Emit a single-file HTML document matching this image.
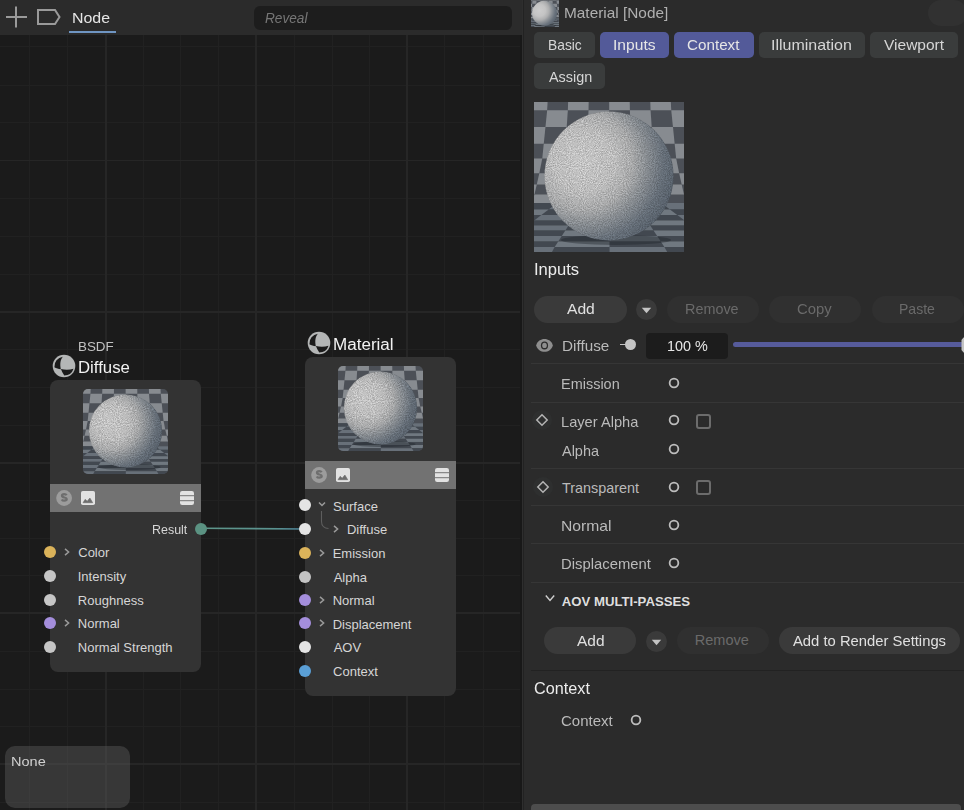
<!DOCTYPE html>
<html><head><meta charset="utf-8"><style>
html,body{margin:0;padding:0;width:964px;height:810px;overflow:hidden;background:#2b2b2b}
body{position:relative;font-family:"Liberation Sans",sans-serif}
</style></head><body>
<svg width="0" height="0" style="position:absolute">
<defs>
<radialGradient id="sph" cx="0.3" cy="0.38" r="0.8">
<stop offset="0" stop-color="#cdcdcd"/>
<stop offset="0.3" stop-color="#c4c4c4"/>
<stop offset="0.48" stop-color="#aeafb0"/>
<stop offset="0.62" stop-color="#8c9196"/>
<stop offset="0.78" stop-color="#6a737d"/>
<stop offset="1" stop-color="#505a65"/>
</radialGradient>
<filter id="nzL" x="0" y="0" width="100%" height="100%" color-interpolation-filters="sRGB">
<feTurbulence type="fractalNoise" baseFrequency="0.93" numOctaves="2" seed="5" result="t"/>
<feColorMatrix in="t" type="matrix" values="1.6 0 0 0 -0.3  1.6 0 0 0 -0.3  1.6 0 0 0 -0.3  0 0 0 0 1" result="g"/>
<feComposite in="SourceGraphic" in2="g" operator="arithmetic" k1="0.32" k2="0.8" k3="0" k4="0"/>
</filter><filter id="nzM" x="0" y="0" width="100%" height="100%" color-interpolation-filters="sRGB">
<feTurbulence type="fractalNoise" baseFrequency="0.53" numOctaves="2" seed="5" result="t"/>
<feColorMatrix in="t" type="matrix" values="1.6 0 0 0 -0.3  1.6 0 0 0 -0.3  1.6 0 0 0 -0.3  0 0 0 0 1" result="g"/>
<feComposite in="SourceGraphic" in2="g" operator="arithmetic" k1="0.32" k2="0.8" k3="0" k4="0"/>
</filter>
<symbol id="prev" viewBox="0 0 150 150"><rect x="0" y="0" width="150" height="150" fill="#4c5057"/><polygon points="-210.40,-8.40 -190.00,-8.40 -193.67,8.30 -214.35,8.30" fill="#878b90"/><polygon points="-169.60,-8.40 -149.20,-8.40 -152.30,8.30 -172.98,8.30" fill="#878b90"/><polygon points="-128.80,-8.40 -108.40,-8.40 -110.94,8.30 -131.62,8.30" fill="#878b90"/><polygon points="-88.00,-8.40 -67.60,-8.40 -69.57,8.30 -90.25,8.30" fill="#878b90"/><polygon points="-47.20,-8.40 -26.80,-8.40 -28.21,8.30 -48.89,8.30" fill="#878b90"/><polygon points="-6.40,-8.40 14.00,-8.40 13.16,8.30 -7.53,8.30" fill="#878b90"/><polygon points="34.40,-8.40 54.80,-8.40 54.52,8.30 33.84,8.30" fill="#878b90"/><polygon points="75.20,-8.40 95.60,-8.40 95.88,8.30 75.20,8.30" fill="#878b90"/><polygon points="116.00,-8.40 136.40,-8.40 137.25,8.30 116.57,8.30" fill="#878b90"/><polygon points="156.80,-8.40 177.20,-8.40 178.61,8.30 157.93,8.30" fill="#878b90"/><polygon points="197.60,-8.40 218.00,-8.40 219.98,8.30 199.30,8.30" fill="#878b90"/><polygon points="238.40,-8.40 258.80,-8.40 261.34,8.30 240.66,8.30" fill="#878b90"/><polygon points="-235.03,8.30 -214.35,8.30 -222.29,25.00 -243.54,25.00" fill="#878b90"/><polygon points="-193.67,8.30 -172.98,8.30 -179.79,25.00 -201.04,25.00" fill="#878b90"/><polygon points="-152.30,8.30 -131.62,8.30 -137.29,25.00 -158.54,25.00" fill="#878b90"/><polygon points="-110.94,8.30 -90.25,8.30 -94.79,25.00 -116.04,25.00" fill="#878b90"/><polygon points="-69.57,8.30 -48.89,8.30 -52.29,25.00 -73.54,25.00" fill="#878b90"/><polygon points="-28.21,8.30 -7.53,8.30 -9.79,25.00 -31.04,25.00" fill="#878b90"/><polygon points="13.16,8.30 33.84,8.30 32.71,25.00 11.46,25.00" fill="#878b90"/><polygon points="54.52,8.30 75.20,8.30 75.21,25.00 53.96,25.00" fill="#878b90"/><polygon points="95.88,8.30 116.57,8.30 117.71,25.00 96.46,25.00" fill="#878b90"/><polygon points="137.25,8.30 157.93,8.30 160.21,25.00 138.96,25.00" fill="#878b90"/><polygon points="178.61,8.30 199.30,8.30 202.71,25.00 181.46,25.00" fill="#878b90"/><polygon points="219.98,8.30 240.66,8.30 245.21,25.00 223.96,25.00" fill="#878b90"/><polygon points="-222.29,25.00 -201.04,25.00 -208.42,41.70 -230.24,41.70" fill="#878b90"/><polygon points="-179.79,25.00 -158.54,25.00 -164.78,41.70 -186.60,41.70" fill="#878b90"/><polygon points="-137.29,25.00 -116.04,25.00 -121.15,41.70 -142.96,41.70" fill="#878b90"/><polygon points="-94.79,25.00 -73.54,25.00 -77.51,41.70 -99.33,41.70" fill="#878b90"/><polygon points="-52.29,25.00 -31.04,25.00 -33.88,41.70 -55.69,41.70" fill="#878b90"/><polygon points="-9.79,25.00 11.46,25.00 9.76,41.70 -12.06,41.70" fill="#878b90"/><polygon points="32.71,25.00 53.96,25.00 53.40,41.70 31.58,41.70" fill="#878b90"/><polygon points="75.21,25.00 96.46,25.00 97.03,41.70 75.21,41.70" fill="#878b90"/><polygon points="117.71,25.00 138.96,25.00 140.67,41.70 118.85,41.70" fill="#878b90"/><polygon points="160.21,25.00 181.46,25.00 184.30,41.70 162.49,41.70" fill="#878b90"/><polygon points="202.71,25.00 223.96,25.00 227.94,41.70 206.12,41.70" fill="#878b90"/><polygon points="245.21,25.00 266.46,25.00 271.57,41.70 249.76,41.70" fill="#878b90"/><polygon points="-252.05,41.70 -230.24,41.70 -237.28,56.50 -259.60,56.50" fill="#878b90"/><polygon points="-208.42,41.70 -186.60,41.70 -192.63,56.50 -214.95,56.50" fill="#878b90"/><polygon points="-164.78,41.70 -142.96,41.70 -147.99,56.50 -170.31,56.50" fill="#878b90"/><polygon points="-121.15,41.70 -99.33,41.70 -103.35,56.50 -125.67,56.50" fill="#878b90"/><polygon points="-77.51,41.70 -55.69,41.70 -58.71,56.50 -81.03,56.50" fill="#878b90"/><polygon points="-33.88,41.70 -12.06,41.70 -14.07,56.50 -36.39,56.50" fill="#878b90"/><polygon points="9.76,41.70 31.58,41.70 30.58,56.50 8.26,56.50" fill="#878b90"/><polygon points="53.40,41.70 75.21,41.70 75.22,56.50 52.90,56.50" fill="#878b90"/><polygon points="97.03,41.70 118.85,41.70 119.86,56.50 97.54,56.50" fill="#878b90"/><polygon points="140.67,41.70 162.49,41.70 164.50,56.50 142.18,56.50" fill="#878b90"/><polygon points="184.30,41.70 206.12,41.70 209.14,56.50 186.82,56.50" fill="#878b90"/><polygon points="227.94,41.70 249.76,41.70 253.79,56.50 231.47,56.50" fill="#878b90"/><polygon points="-237.28,56.50 -214.95,56.50 -227.73,71.30 -251.03,71.30" fill="#878b90"/><polygon points="-192.63,56.50 -170.31,56.50 -181.12,71.30 -204.42,71.30" fill="#878b90"/><polygon points="-147.99,56.50 -125.67,56.50 -134.51,71.30 -157.82,71.30" fill="#878b90"/><polygon points="-103.35,56.50 -81.03,56.50 -87.90,71.30 -111.21,71.30" fill="#878b90"/><polygon points="-58.71,56.50 -36.39,56.50 -41.29,71.30 -64.60,71.30" fill="#878b90"/><polygon points="-14.07,56.50 8.26,56.50 5.32,71.30 -17.99,71.30" fill="#878b90"/><polygon points="30.58,56.50 52.90,56.50 51.92,71.30 28.62,71.30" fill="#878b90"/><polygon points="75.22,56.50 97.54,56.50 98.53,71.30 75.23,71.30" fill="#878b90"/><polygon points="119.86,56.50 142.18,56.50 145.14,71.30 121.84,71.30" fill="#878b90"/><polygon points="164.50,56.50 186.82,56.50 191.75,71.30 168.45,71.30" fill="#878b90"/><polygon points="209.14,56.50 231.47,56.50 238.36,71.30 215.06,71.30" fill="#878b90"/><polygon points="253.79,56.50 276.11,56.50 284.97,71.30 261.66,71.30" fill="#878b90"/><polygon points="-274.34,71.30 -251.03,71.30 -262.91,82.40 -287.07,82.40" fill="#878b90"/><polygon points="-227.73,71.30 -204.42,71.30 -214.61,82.40 -238.76,82.40" fill="#878b90"/><polygon points="-181.12,71.30 -157.82,71.30 -166.30,82.40 -190.45,82.40" fill="#878b90"/><polygon points="-134.51,71.30 -111.21,71.30 -117.99,82.40 -142.15,82.40" fill="#878b90"/><polygon points="-87.90,71.30 -64.60,71.30 -69.68,82.40 -93.84,82.40" fill="#878b90"/><polygon points="-41.29,71.30 -17.99,71.30 -21.38,82.40 -45.53,82.40" fill="#878b90"/><polygon points="5.32,71.30 28.62,71.30 26.93,82.40 2.78,82.40" fill="#878b90"/><polygon points="51.92,71.30 75.23,71.30 75.24,82.40 51.08,82.40" fill="#878b90"/><polygon points="98.53,71.30 121.84,71.30 123.54,82.40 99.39,82.40" fill="#878b90"/><polygon points="145.14,71.30 168.45,71.30 171.85,82.40 147.70,82.40" fill="#878b90"/><polygon points="191.75,71.30 215.06,71.30 220.16,82.40 196.00,82.40" fill="#878b90"/><polygon points="238.36,71.30 261.66,71.30 268.47,82.40 244.31,82.40" fill="#878b90"/><polygon points="-262.91,82.40 -238.76,82.40 -248.90,92.60 -273.83,92.60" fill="#878b90"/><polygon points="-214.61,82.40 -190.45,82.40 -199.03,92.60 -223.96,92.60" fill="#878b90"/><polygon points="-166.30,82.40 -142.15,82.40 -149.16,92.60 -174.09,92.60" fill="#878b90"/><polygon points="-117.99,82.40 -93.84,82.40 -99.29,92.60 -124.23,92.60" fill="#878b90"/><polygon points="-69.68,82.40 -45.53,82.40 -49.43,92.60 -74.36,92.60" fill="#878b90"/><polygon points="-21.38,82.40 2.78,82.40 0.44,92.60 -24.49,92.60" fill="#878b90"/><polygon points="26.93,82.40 51.08,82.40 50.31,92.60 25.38,92.60" fill="#878b90"/><polygon points="75.24,82.40 99.39,82.40 100.18,92.60 75.24,92.60" fill="#878b90"/><polygon points="123.54,82.40 147.70,82.40 150.05,92.60 125.11,92.60" fill="#878b90"/><polygon points="171.85,82.40 196.00,82.40 199.91,92.60 174.98,92.60" fill="#878b90"/><polygon points="220.16,82.40 244.31,82.40 249.78,92.60 224.85,92.60" fill="#878b90"/><polygon points="268.47,82.40 292.62,82.40 299.65,92.60 274.72,92.60" fill="#878b90"/><polygon points="-298.76,92.60 -273.83,92.60 -290.88,101.00 -317.04,101.00" fill="#878b90"/><polygon points="-248.90,92.60 -223.96,92.60 -238.58,101.00 -264.73,101.00" fill="#878b90"/><polygon points="-199.03,92.60 -174.09,92.60 -186.27,101.00 -212.42,101.00" fill="#878b90"/><polygon points="-149.16,92.60 -124.23,92.60 -133.97,101.00 -160.12,101.00" fill="#878b90"/><polygon points="-99.29,92.60 -74.36,92.60 -81.66,101.00 -107.81,101.00" fill="#878b90"/><polygon points="-49.43,92.60 -24.49,92.60 -29.35,101.00 -55.51,101.00" fill="#878b90"/><polygon points="0.44,92.60 25.38,92.60 22.95,101.00 -3.20,101.00" fill="#878b90"/><polygon points="50.31,92.60 75.24,92.60 75.26,101.00 49.10,101.00" fill="#878b90"/><polygon points="100.18,92.60 125.11,92.60 127.56,101.00 101.41,101.00" fill="#878b90"/><polygon points="150.05,92.60 174.98,92.60 179.87,101.00 153.71,101.00" fill="#878b90"/><polygon points="199.91,92.60 224.85,92.60 232.17,101.00 206.02,101.00" fill="#878b90"/><polygon points="249.78,92.60 274.72,92.60 284.48,101.00 258.33,101.00" fill="#878b90"/><rect x="0" y="101" width="150" height="6.400000000000006" fill="#424850"/><polygon points="-290.88,101.00 -264.73,101.00 -319.00,107.40 -349.33,107.40" fill="#687079"/><polygon points="-238.58,101.00 -212.42,101.00 -258.34,107.40 -288.67,107.40" fill="#687079"/><polygon points="-186.27,101.00 -160.12,101.00 -197.68,107.40 -228.01,107.40" fill="#687079"/><polygon points="-133.97,101.00 -107.81,101.00 -137.02,107.40 -167.35,107.40" fill="#687079"/><polygon points="-81.66,101.00 -55.51,101.00 -76.36,107.40 -106.69,107.40" fill="#687079"/><polygon points="-29.35,101.00 -3.20,101.00 -15.69,107.40 -46.03,107.40" fill="#687079"/><polygon points="22.95,101.00 49.10,101.00 44.97,107.40 14.64,107.40" fill="#687079"/><polygon points="75.26,101.00 101.41,101.00 105.63,107.40 75.30,107.40" fill="#687079"/><polygon points="127.56,101.00 153.71,101.00 166.29,107.40 135.96,107.40" fill="#687079"/><polygon points="179.87,101.00 206.02,101.00 226.95,107.40 196.62,107.40" fill="#687079"/><polygon points="232.17,101.00 258.33,101.00 287.61,107.40 257.28,107.40" fill="#687079"/><polygon points="284.48,101.00 310.63,101.00 348.27,107.40 317.94,107.40" fill="#687079"/><rect x="0" y="107.4" width="150" height="5.599999999999994" fill="#424850"/><polygon points="-379.66,107.40 -349.33,107.40 -400.48,113.00 -434.46,113.00" fill="#707880"/><polygon points="-319.00,107.40 -288.67,107.40 -332.50,113.00 -366.49,113.00" fill="#707880"/><polygon points="-258.34,107.40 -228.01,107.40 -264.53,113.00 -298.52,113.00" fill="#707880"/><polygon points="-197.68,107.40 -167.35,107.40 -196.56,113.00 -230.54,113.00" fill="#707880"/><polygon points="-137.02,107.40 -106.69,107.40 -128.59,113.00 -162.57,113.00" fill="#707880"/><polygon points="-76.36,107.40 -46.03,107.40 -60.61,113.00 -94.60,113.00" fill="#707880"/><polygon points="-15.69,107.40 14.64,107.40 7.36,113.00 -26.63,113.00" fill="#707880"/><polygon points="44.97,107.40 75.30,107.40 75.33,113.00 41.35,113.00" fill="#707880"/><polygon points="105.63,107.40 135.96,107.40 143.31,113.00 109.32,113.00" fill="#707880"/><polygon points="166.29,107.40 196.62,107.40 211.28,113.00 177.29,113.00" fill="#707880"/><polygon points="226.95,107.40 257.28,107.40 279.25,113.00 245.27,113.00" fill="#707880"/><polygon points="287.61,107.40 317.94,107.40 347.22,113.00 313.24,113.00" fill="#707880"/><rect x="0" y="113" width="150" height="5.5" fill="#424850"/><polygon points="-400.48,113.00 -366.49,113.00 -413.13,118.50 -450.71,118.50" fill="#687079"/><polygon points="-332.50,113.00 -298.52,113.00 -337.98,118.50 -375.55,118.50" fill="#687079"/><polygon points="-264.53,113.00 -230.54,113.00 -262.82,118.50 -300.40,118.50" fill="#687079"/><polygon points="-196.56,113.00 -162.57,113.00 -187.67,118.50 -225.25,118.50" fill="#687079"/><polygon points="-128.59,113.00 -94.60,113.00 -112.52,118.50 -150.09,118.50" fill="#687079"/><polygon points="-60.61,113.00 -26.63,113.00 -37.36,118.50 -74.94,118.50" fill="#687079"/><polygon points="7.36,113.00 41.35,113.00 37.79,118.50 0.21,118.50" fill="#687079"/><polygon points="75.33,113.00 109.32,113.00 112.95,118.50 75.37,118.50" fill="#687079"/><polygon points="143.31,113.00 177.29,113.00 188.10,118.50 150.52,118.50" fill="#687079"/><polygon points="211.28,113.00 245.27,113.00 263.25,118.50 225.68,118.50" fill="#687079"/><polygon points="279.25,113.00 313.24,113.00 338.41,118.50 300.83,118.50" fill="#687079"/><polygon points="347.22,113.00 381.21,113.00 413.56,118.50 375.98,118.50" fill="#687079"/><rect x="0" y="118.5" width="150" height="5.0" fill="#424850"/><polygon points="-488.28,118.50 -450.71,118.50 -496.37,123.50 -537.21,123.50" fill="#707880"/><polygon points="-413.13,118.50 -375.55,118.50 -414.69,123.50 -455.53,123.50" fill="#707880"/><polygon points="-337.98,118.50 -300.40,118.50 -333.01,123.50 -373.85,123.50" fill="#707880"/><polygon points="-262.82,118.50 -225.25,118.50 -251.33,123.50 -292.17,123.50" fill="#707880"/><polygon points="-187.67,118.50 -150.09,118.50 -169.64,123.50 -210.49,123.50" fill="#707880"/><polygon points="-112.52,118.50 -74.94,118.50 -87.96,123.50 -128.80,123.50" fill="#707880"/><polygon points="-37.36,118.50 0.21,118.50 -6.28,123.50 -47.12,123.50" fill="#707880"/><polygon points="37.79,118.50 75.37,118.50 75.40,123.50 34.56,123.50" fill="#707880"/><polygon points="112.95,118.50 150.52,118.50 157.08,123.50 116.24,123.50" fill="#707880"/><polygon points="188.10,118.50 225.68,118.50 238.76,123.50 197.92,123.50" fill="#707880"/><polygon points="263.25,118.50 300.83,118.50 320.45,123.50 279.60,123.50" fill="#707880"/><polygon points="338.41,118.50 375.98,118.50 402.13,123.50 361.29,123.50" fill="#707880"/><rect x="0" y="123.5" width="150" height="5.0" fill="#424850"/><polygon points="-496.37,123.50 -455.53,123.50 -497.93,128.50 -542.03,128.50" fill="#687079"/><polygon points="-414.69,123.50 -373.85,123.50 -409.72,128.50 -453.83,128.50" fill="#687079"/><polygon points="-333.01,123.50 -292.17,123.50 -321.51,128.50 -365.62,128.50" fill="#687079"/><polygon points="-251.33,123.50 -210.49,123.50 -233.30,128.50 -277.41,128.50" fill="#687079"/><polygon points="-169.64,123.50 -128.80,123.50 -145.09,128.50 -189.20,128.50" fill="#687079"/><polygon points="-87.96,123.50 -47.12,123.50 -56.88,128.50 -100.99,128.50" fill="#687079"/><polygon points="-6.28,123.50 34.56,123.50 31.33,128.50 -12.78,128.50" fill="#687079"/><polygon points="75.40,123.50 116.24,123.50 119.54,128.50 75.43,128.50" fill="#687079"/><polygon points="157.08,123.50 197.92,123.50 207.75,128.50 163.64,128.50" fill="#687079"/><polygon points="238.76,123.50 279.60,123.50 295.96,128.50 251.85,128.50" fill="#687079"/><polygon points="320.45,123.50 361.29,123.50 384.17,128.50 340.06,128.50" fill="#687079"/><polygon points="402.13,123.50 442.97,123.50 472.38,128.50 428.27,128.50" fill="#687079"/><rect x="0" y="128.5" width="150" height="5.5" fill="#424850"/><polygon points="-586.14,128.50 -542.03,128.50 -592.27,134.00 -639.96,134.00" fill="#707880"/><polygon points="-497.93,128.50 -453.83,128.50 -496.87,134.00 -544.57,134.00" fill="#707880"/><polygon points="-409.72,128.50 -365.62,128.50 -401.48,134.00 -449.18,134.00" fill="#707880"/><polygon points="-321.51,128.50 -277.41,128.50 -306.09,134.00 -353.79,134.00" fill="#707880"/><polygon points="-233.30,128.50 -189.20,128.50 -210.70,134.00 -258.40,134.00" fill="#707880"/><polygon points="-145.09,128.50 -100.99,128.50 -115.31,134.00 -163.01,134.00" fill="#707880"/><polygon points="-56.88,128.50 -12.78,128.50 -19.92,134.00 -67.62,134.00" fill="#707880"/><polygon points="31.33,128.50 75.43,128.50 75.47,134.00 27.77,134.00" fill="#707880"/><polygon points="119.54,128.50 163.64,128.50 170.86,134.00 123.16,134.00" fill="#707880"/><polygon points="207.75,128.50 251.85,128.50 266.25,134.00 218.55,134.00" fill="#707880"/><polygon points="295.96,128.50 340.06,128.50 361.64,134.00 313.94,134.00" fill="#707880"/><polygon points="384.17,128.50 428.27,128.50 457.03,134.00 409.33,134.00" fill="#707880"/><rect x="0" y="134" width="150" height="5.5" fill="#424850"/><polygon points="-592.27,134.00 -544.57,134.00 -591.21,139.50 -642.50,139.50" fill="#687079"/><polygon points="-496.87,134.00 -449.18,134.00 -488.64,139.50 -539.92,139.50" fill="#687079"/><polygon points="-401.48,134.00 -353.79,134.00 -386.07,139.50 -437.35,139.50" fill="#687079"/><polygon points="-306.09,134.00 -258.40,134.00 -283.50,139.50 -334.78,139.50" fill="#687079"/><polygon points="-210.70,134.00 -163.01,134.00 -180.93,139.50 -232.21,139.50" fill="#687079"/><polygon points="-115.31,134.00 -67.62,134.00 -78.35,139.50 -129.64,139.50" fill="#687079"/><polygon points="-19.92,134.00 27.77,134.00 24.22,139.50 -27.07,139.50" fill="#687079"/><polygon points="75.47,134.00 123.16,134.00 126.79,139.50 75.50,139.50" fill="#687079"/><polygon points="170.86,134.00 218.55,134.00 229.36,139.50 178.07,139.50" fill="#687079"/><polygon points="266.25,134.00 313.94,134.00 331.93,139.50 280.65,139.50" fill="#687079"/><polygon points="361.64,134.00 409.33,134.00 434.50,139.50 383.22,139.50" fill="#687079"/><polygon points="457.03,134.00 504.72,134.00 537.07,139.50 485.79,139.50" fill="#687079"/><rect x="0" y="139.5" width="150" height="5.5" fill="#424850"/><polygon points="-693.78,139.50 -642.50,139.50 -692.73,145.00 -747.60,145.00" fill="#707880"/><polygon points="-591.21,139.50 -539.92,139.50 -582.97,145.00 -637.85,145.00" fill="#707880"/><polygon points="-488.64,139.50 -437.35,139.50 -473.22,145.00 -528.10,145.00" fill="#707880"/><polygon points="-386.07,139.50 -334.78,139.50 -363.47,145.00 -418.35,145.00" fill="#707880"/><polygon points="-283.50,139.50 -232.21,139.50 -253.72,145.00 -308.59,145.00" fill="#707880"/><polygon points="-180.93,139.50 -129.64,139.50 -143.97,145.00 -198.84,145.00" fill="#707880"/><polygon points="-78.35,139.50 -27.07,139.50 -34.21,145.00 -89.09,145.00" fill="#707880"/><polygon points="24.22,139.50 75.50,139.50 75.54,145.00 20.66,145.00" fill="#707880"/><polygon points="126.79,139.50 178.07,139.50 185.29,145.00 130.41,145.00" fill="#707880"/><polygon points="229.36,139.50 280.65,139.50 295.04,145.00 240.17,145.00" fill="#707880"/><polygon points="331.93,139.50 383.22,139.50 404.79,145.00 349.92,145.00" fill="#707880"/><polygon points="434.50,139.50 485.79,139.50 514.55,145.00 459.67,145.00" fill="#707880"/><rect x="0" y="145" width="150" height="6" fill="#424850"/><polygon points="-692.73,145.00 -637.85,145.00 -680.25,151.00 -738.39,151.00" fill="#687079"/><polygon points="-582.97,145.00 -528.10,145.00 -563.97,151.00 -622.11,151.00" fill="#687079"/><polygon points="-473.22,145.00 -418.35,145.00 -447.69,151.00 -505.83,151.00" fill="#687079"/><polygon points="-363.47,145.00 -308.59,145.00 -331.41,151.00 -389.55,151.00" fill="#687079"/><polygon points="-253.72,145.00 -198.84,145.00 -215.13,151.00 -273.27,151.00" fill="#687079"/><polygon points="-143.97,145.00 -89.09,145.00 -98.85,151.00 -156.99,151.00" fill="#687079"/><polygon points="-34.21,145.00 20.66,145.00 17.43,151.00 -40.71,151.00" fill="#687079"/><polygon points="75.54,145.00 130.41,145.00 133.71,151.00 75.57,151.00" fill="#687079"/><polygon points="185.29,145.00 240.17,145.00 249.99,151.00 191.85,151.00" fill="#687079"/><polygon points="295.04,145.00 349.92,145.00 366.27,151.00 308.13,151.00" fill="#687079"/><polygon points="404.79,145.00 459.67,145.00 482.55,151.00 424.41,151.00" fill="#687079"/><polygon points="514.55,145.00 569.42,145.00 598.83,151.00 540.69,151.00" fill="#687079"/><ellipse cx="82" cy="138" rx="55" ry="5" fill="#1e2228" opacity="0.4"/><circle cx="75" cy="74" r="64.5" fill="url(#sph)" filter="url(#nzL)"/></symbol><symbol id="prevM" viewBox="0 0 150 150"><rect x="0" y="0" width="150" height="150" fill="#4c5057"/><polygon points="-210.40,-8.40 -190.00,-8.40 -193.67,8.30 -214.35,8.30" fill="#878b90"/><polygon points="-169.60,-8.40 -149.20,-8.40 -152.30,8.30 -172.98,8.30" fill="#878b90"/><polygon points="-128.80,-8.40 -108.40,-8.40 -110.94,8.30 -131.62,8.30" fill="#878b90"/><polygon points="-88.00,-8.40 -67.60,-8.40 -69.57,8.30 -90.25,8.30" fill="#878b90"/><polygon points="-47.20,-8.40 -26.80,-8.40 -28.21,8.30 -48.89,8.30" fill="#878b90"/><polygon points="-6.40,-8.40 14.00,-8.40 13.16,8.30 -7.53,8.30" fill="#878b90"/><polygon points="34.40,-8.40 54.80,-8.40 54.52,8.30 33.84,8.30" fill="#878b90"/><polygon points="75.20,-8.40 95.60,-8.40 95.88,8.30 75.20,8.30" fill="#878b90"/><polygon points="116.00,-8.40 136.40,-8.40 137.25,8.30 116.57,8.30" fill="#878b90"/><polygon points="156.80,-8.40 177.20,-8.40 178.61,8.30 157.93,8.30" fill="#878b90"/><polygon points="197.60,-8.40 218.00,-8.40 219.98,8.30 199.30,8.30" fill="#878b90"/><polygon points="238.40,-8.40 258.80,-8.40 261.34,8.30 240.66,8.30" fill="#878b90"/><polygon points="-235.03,8.30 -214.35,8.30 -222.29,25.00 -243.54,25.00" fill="#878b90"/><polygon points="-193.67,8.30 -172.98,8.30 -179.79,25.00 -201.04,25.00" fill="#878b90"/><polygon points="-152.30,8.30 -131.62,8.30 -137.29,25.00 -158.54,25.00" fill="#878b90"/><polygon points="-110.94,8.30 -90.25,8.30 -94.79,25.00 -116.04,25.00" fill="#878b90"/><polygon points="-69.57,8.30 -48.89,8.30 -52.29,25.00 -73.54,25.00" fill="#878b90"/><polygon points="-28.21,8.30 -7.53,8.30 -9.79,25.00 -31.04,25.00" fill="#878b90"/><polygon points="13.16,8.30 33.84,8.30 32.71,25.00 11.46,25.00" fill="#878b90"/><polygon points="54.52,8.30 75.20,8.30 75.21,25.00 53.96,25.00" fill="#878b90"/><polygon points="95.88,8.30 116.57,8.30 117.71,25.00 96.46,25.00" fill="#878b90"/><polygon points="137.25,8.30 157.93,8.30 160.21,25.00 138.96,25.00" fill="#878b90"/><polygon points="178.61,8.30 199.30,8.30 202.71,25.00 181.46,25.00" fill="#878b90"/><polygon points="219.98,8.30 240.66,8.30 245.21,25.00 223.96,25.00" fill="#878b90"/><polygon points="-222.29,25.00 -201.04,25.00 -208.42,41.70 -230.24,41.70" fill="#878b90"/><polygon points="-179.79,25.00 -158.54,25.00 -164.78,41.70 -186.60,41.70" fill="#878b90"/><polygon points="-137.29,25.00 -116.04,25.00 -121.15,41.70 -142.96,41.70" fill="#878b90"/><polygon points="-94.79,25.00 -73.54,25.00 -77.51,41.70 -99.33,41.70" fill="#878b90"/><polygon points="-52.29,25.00 -31.04,25.00 -33.88,41.70 -55.69,41.70" fill="#878b90"/><polygon points="-9.79,25.00 11.46,25.00 9.76,41.70 -12.06,41.70" fill="#878b90"/><polygon points="32.71,25.00 53.96,25.00 53.40,41.70 31.58,41.70" fill="#878b90"/><polygon points="75.21,25.00 96.46,25.00 97.03,41.70 75.21,41.70" fill="#878b90"/><polygon points="117.71,25.00 138.96,25.00 140.67,41.70 118.85,41.70" fill="#878b90"/><polygon points="160.21,25.00 181.46,25.00 184.30,41.70 162.49,41.70" fill="#878b90"/><polygon points="202.71,25.00 223.96,25.00 227.94,41.70 206.12,41.70" fill="#878b90"/><polygon points="245.21,25.00 266.46,25.00 271.57,41.70 249.76,41.70" fill="#878b90"/><polygon points="-252.05,41.70 -230.24,41.70 -237.28,56.50 -259.60,56.50" fill="#878b90"/><polygon points="-208.42,41.70 -186.60,41.70 -192.63,56.50 -214.95,56.50" fill="#878b90"/><polygon points="-164.78,41.70 -142.96,41.70 -147.99,56.50 -170.31,56.50" fill="#878b90"/><polygon points="-121.15,41.70 -99.33,41.70 -103.35,56.50 -125.67,56.50" fill="#878b90"/><polygon points="-77.51,41.70 -55.69,41.70 -58.71,56.50 -81.03,56.50" fill="#878b90"/><polygon points="-33.88,41.70 -12.06,41.70 -14.07,56.50 -36.39,56.50" fill="#878b90"/><polygon points="9.76,41.70 31.58,41.70 30.58,56.50 8.26,56.50" fill="#878b90"/><polygon points="53.40,41.70 75.21,41.70 75.22,56.50 52.90,56.50" fill="#878b90"/><polygon points="97.03,41.70 118.85,41.70 119.86,56.50 97.54,56.50" fill="#878b90"/><polygon points="140.67,41.70 162.49,41.70 164.50,56.50 142.18,56.50" fill="#878b90"/><polygon points="184.30,41.70 206.12,41.70 209.14,56.50 186.82,56.50" fill="#878b90"/><polygon points="227.94,41.70 249.76,41.70 253.79,56.50 231.47,56.50" fill="#878b90"/><polygon points="-237.28,56.50 -214.95,56.50 -227.73,71.30 -251.03,71.30" fill="#878b90"/><polygon points="-192.63,56.50 -170.31,56.50 -181.12,71.30 -204.42,71.30" fill="#878b90"/><polygon points="-147.99,56.50 -125.67,56.50 -134.51,71.30 -157.82,71.30" fill="#878b90"/><polygon points="-103.35,56.50 -81.03,56.50 -87.90,71.30 -111.21,71.30" fill="#878b90"/><polygon points="-58.71,56.50 -36.39,56.50 -41.29,71.30 -64.60,71.30" fill="#878b90"/><polygon points="-14.07,56.50 8.26,56.50 5.32,71.30 -17.99,71.30" fill="#878b90"/><polygon points="30.58,56.50 52.90,56.50 51.92,71.30 28.62,71.30" fill="#878b90"/><polygon points="75.22,56.50 97.54,56.50 98.53,71.30 75.23,71.30" fill="#878b90"/><polygon points="119.86,56.50 142.18,56.50 145.14,71.30 121.84,71.30" fill="#878b90"/><polygon points="164.50,56.50 186.82,56.50 191.75,71.30 168.45,71.30" fill="#878b90"/><polygon points="209.14,56.50 231.47,56.50 238.36,71.30 215.06,71.30" fill="#878b90"/><polygon points="253.79,56.50 276.11,56.50 284.97,71.30 261.66,71.30" fill="#878b90"/><polygon points="-274.34,71.30 -251.03,71.30 -262.91,82.40 -287.07,82.40" fill="#878b90"/><polygon points="-227.73,71.30 -204.42,71.30 -214.61,82.40 -238.76,82.40" fill="#878b90"/><polygon points="-181.12,71.30 -157.82,71.30 -166.30,82.40 -190.45,82.40" fill="#878b90"/><polygon points="-134.51,71.30 -111.21,71.30 -117.99,82.40 -142.15,82.40" fill="#878b90"/><polygon points="-87.90,71.30 -64.60,71.30 -69.68,82.40 -93.84,82.40" fill="#878b90"/><polygon points="-41.29,71.30 -17.99,71.30 -21.38,82.40 -45.53,82.40" fill="#878b90"/><polygon points="5.32,71.30 28.62,71.30 26.93,82.40 2.78,82.40" fill="#878b90"/><polygon points="51.92,71.30 75.23,71.30 75.24,82.40 51.08,82.40" fill="#878b90"/><polygon points="98.53,71.30 121.84,71.30 123.54,82.40 99.39,82.40" fill="#878b90"/><polygon points="145.14,71.30 168.45,71.30 171.85,82.40 147.70,82.40" fill="#878b90"/><polygon points="191.75,71.30 215.06,71.30 220.16,82.40 196.00,82.40" fill="#878b90"/><polygon points="238.36,71.30 261.66,71.30 268.47,82.40 244.31,82.40" fill="#878b90"/><polygon points="-262.91,82.40 -238.76,82.40 -248.90,92.60 -273.83,92.60" fill="#878b90"/><polygon points="-214.61,82.40 -190.45,82.40 -199.03,92.60 -223.96,92.60" fill="#878b90"/><polygon points="-166.30,82.40 -142.15,82.40 -149.16,92.60 -174.09,92.60" fill="#878b90"/><polygon points="-117.99,82.40 -93.84,82.40 -99.29,92.60 -124.23,92.60" fill="#878b90"/><polygon points="-69.68,82.40 -45.53,82.40 -49.43,92.60 -74.36,92.60" fill="#878b90"/><polygon points="-21.38,82.40 2.78,82.40 0.44,92.60 -24.49,92.60" fill="#878b90"/><polygon points="26.93,82.40 51.08,82.40 50.31,92.60 25.38,92.60" fill="#878b90"/><polygon points="75.24,82.40 99.39,82.40 100.18,92.60 75.24,92.60" fill="#878b90"/><polygon points="123.54,82.40 147.70,82.40 150.05,92.60 125.11,92.60" fill="#878b90"/><polygon points="171.85,82.40 196.00,82.40 199.91,92.60 174.98,92.60" fill="#878b90"/><polygon points="220.16,82.40 244.31,82.40 249.78,92.60 224.85,92.60" fill="#878b90"/><polygon points="268.47,82.40 292.62,82.40 299.65,92.60 274.72,92.60" fill="#878b90"/><polygon points="-298.76,92.60 -273.83,92.60 -290.88,101.00 -317.04,101.00" fill="#878b90"/><polygon points="-248.90,92.60 -223.96,92.60 -238.58,101.00 -264.73,101.00" fill="#878b90"/><polygon points="-199.03,92.60 -174.09,92.60 -186.27,101.00 -212.42,101.00" fill="#878b90"/><polygon points="-149.16,92.60 -124.23,92.60 -133.97,101.00 -160.12,101.00" fill="#878b90"/><polygon points="-99.29,92.60 -74.36,92.60 -81.66,101.00 -107.81,101.00" fill="#878b90"/><polygon points="-49.43,92.60 -24.49,92.60 -29.35,101.00 -55.51,101.00" fill="#878b90"/><polygon points="0.44,92.60 25.38,92.60 22.95,101.00 -3.20,101.00" fill="#878b90"/><polygon points="50.31,92.60 75.24,92.60 75.26,101.00 49.10,101.00" fill="#878b90"/><polygon points="100.18,92.60 125.11,92.60 127.56,101.00 101.41,101.00" fill="#878b90"/><polygon points="150.05,92.60 174.98,92.60 179.87,101.00 153.71,101.00" fill="#878b90"/><polygon points="199.91,92.60 224.85,92.60 232.17,101.00 206.02,101.00" fill="#878b90"/><polygon points="249.78,92.60 274.72,92.60 284.48,101.00 258.33,101.00" fill="#878b90"/><rect x="0" y="101" width="150" height="6.400000000000006" fill="#424850"/><polygon points="-290.88,101.00 -264.73,101.00 -319.00,107.40 -349.33,107.40" fill="#687079"/><polygon points="-238.58,101.00 -212.42,101.00 -258.34,107.40 -288.67,107.40" fill="#687079"/><polygon points="-186.27,101.00 -160.12,101.00 -197.68,107.40 -228.01,107.40" fill="#687079"/><polygon points="-133.97,101.00 -107.81,101.00 -137.02,107.40 -167.35,107.40" fill="#687079"/><polygon points="-81.66,101.00 -55.51,101.00 -76.36,107.40 -106.69,107.40" fill="#687079"/><polygon points="-29.35,101.00 -3.20,101.00 -15.69,107.40 -46.03,107.40" fill="#687079"/><polygon points="22.95,101.00 49.10,101.00 44.97,107.40 14.64,107.40" fill="#687079"/><polygon points="75.26,101.00 101.41,101.00 105.63,107.40 75.30,107.40" fill="#687079"/><polygon points="127.56,101.00 153.71,101.00 166.29,107.40 135.96,107.40" fill="#687079"/><polygon points="179.87,101.00 206.02,101.00 226.95,107.40 196.62,107.40" fill="#687079"/><polygon points="232.17,101.00 258.33,101.00 287.61,107.40 257.28,107.40" fill="#687079"/><polygon points="284.48,101.00 310.63,101.00 348.27,107.40 317.94,107.40" fill="#687079"/><rect x="0" y="107.4" width="150" height="5.599999999999994" fill="#424850"/><polygon points="-379.66,107.40 -349.33,107.40 -400.48,113.00 -434.46,113.00" fill="#707880"/><polygon points="-319.00,107.40 -288.67,107.40 -332.50,113.00 -366.49,113.00" fill="#707880"/><polygon points="-258.34,107.40 -228.01,107.40 -264.53,113.00 -298.52,113.00" fill="#707880"/><polygon points="-197.68,107.40 -167.35,107.40 -196.56,113.00 -230.54,113.00" fill="#707880"/><polygon points="-137.02,107.40 -106.69,107.40 -128.59,113.00 -162.57,113.00" fill="#707880"/><polygon points="-76.36,107.40 -46.03,107.40 -60.61,113.00 -94.60,113.00" fill="#707880"/><polygon points="-15.69,107.40 14.64,107.40 7.36,113.00 -26.63,113.00" fill="#707880"/><polygon points="44.97,107.40 75.30,107.40 75.33,113.00 41.35,113.00" fill="#707880"/><polygon points="105.63,107.40 135.96,107.40 143.31,113.00 109.32,113.00" fill="#707880"/><polygon points="166.29,107.40 196.62,107.40 211.28,113.00 177.29,113.00" fill="#707880"/><polygon points="226.95,107.40 257.28,107.40 279.25,113.00 245.27,113.00" fill="#707880"/><polygon points="287.61,107.40 317.94,107.40 347.22,113.00 313.24,113.00" fill="#707880"/><rect x="0" y="113" width="150" height="5.5" fill="#424850"/><polygon points="-400.48,113.00 -366.49,113.00 -413.13,118.50 -450.71,118.50" fill="#687079"/><polygon points="-332.50,113.00 -298.52,113.00 -337.98,118.50 -375.55,118.50" fill="#687079"/><polygon points="-264.53,113.00 -230.54,113.00 -262.82,118.50 -300.40,118.50" fill="#687079"/><polygon points="-196.56,113.00 -162.57,113.00 -187.67,118.50 -225.25,118.50" fill="#687079"/><polygon points="-128.59,113.00 -94.60,113.00 -112.52,118.50 -150.09,118.50" fill="#687079"/><polygon points="-60.61,113.00 -26.63,113.00 -37.36,118.50 -74.94,118.50" fill="#687079"/><polygon points="7.36,113.00 41.35,113.00 37.79,118.50 0.21,118.50" fill="#687079"/><polygon points="75.33,113.00 109.32,113.00 112.95,118.50 75.37,118.50" fill="#687079"/><polygon points="143.31,113.00 177.29,113.00 188.10,118.50 150.52,118.50" fill="#687079"/><polygon points="211.28,113.00 245.27,113.00 263.25,118.50 225.68,118.50" fill="#687079"/><polygon points="279.25,113.00 313.24,113.00 338.41,118.50 300.83,118.50" fill="#687079"/><polygon points="347.22,113.00 381.21,113.00 413.56,118.50 375.98,118.50" fill="#687079"/><rect x="0" y="118.5" width="150" height="5.0" fill="#424850"/><polygon points="-488.28,118.50 -450.71,118.50 -496.37,123.50 -537.21,123.50" fill="#707880"/><polygon points="-413.13,118.50 -375.55,118.50 -414.69,123.50 -455.53,123.50" fill="#707880"/><polygon points="-337.98,118.50 -300.40,118.50 -333.01,123.50 -373.85,123.50" fill="#707880"/><polygon points="-262.82,118.50 -225.25,118.50 -251.33,123.50 -292.17,123.50" fill="#707880"/><polygon points="-187.67,118.50 -150.09,118.50 -169.64,123.50 -210.49,123.50" fill="#707880"/><polygon points="-112.52,118.50 -74.94,118.50 -87.96,123.50 -128.80,123.50" fill="#707880"/><polygon points="-37.36,118.50 0.21,118.50 -6.28,123.50 -47.12,123.50" fill="#707880"/><polygon points="37.79,118.50 75.37,118.50 75.40,123.50 34.56,123.50" fill="#707880"/><polygon points="112.95,118.50 150.52,118.50 157.08,123.50 116.24,123.50" fill="#707880"/><polygon points="188.10,118.50 225.68,118.50 238.76,123.50 197.92,123.50" fill="#707880"/><polygon points="263.25,118.50 300.83,118.50 320.45,123.50 279.60,123.50" fill="#707880"/><polygon points="338.41,118.50 375.98,118.50 402.13,123.50 361.29,123.50" fill="#707880"/><rect x="0" y="123.5" width="150" height="5.0" fill="#424850"/><polygon points="-496.37,123.50 -455.53,123.50 -497.93,128.50 -542.03,128.50" fill="#687079"/><polygon points="-414.69,123.50 -373.85,123.50 -409.72,128.50 -453.83,128.50" fill="#687079"/><polygon points="-333.01,123.50 -292.17,123.50 -321.51,128.50 -365.62,128.50" fill="#687079"/><polygon points="-251.33,123.50 -210.49,123.50 -233.30,128.50 -277.41,128.50" fill="#687079"/><polygon points="-169.64,123.50 -128.80,123.50 -145.09,128.50 -189.20,128.50" fill="#687079"/><polygon points="-87.96,123.50 -47.12,123.50 -56.88,128.50 -100.99,128.50" fill="#687079"/><polygon points="-6.28,123.50 34.56,123.50 31.33,128.50 -12.78,128.50" fill="#687079"/><polygon points="75.40,123.50 116.24,123.50 119.54,128.50 75.43,128.50" fill="#687079"/><polygon points="157.08,123.50 197.92,123.50 207.75,128.50 163.64,128.50" fill="#687079"/><polygon points="238.76,123.50 279.60,123.50 295.96,128.50 251.85,128.50" fill="#687079"/><polygon points="320.45,123.50 361.29,123.50 384.17,128.50 340.06,128.50" fill="#687079"/><polygon points="402.13,123.50 442.97,123.50 472.38,128.50 428.27,128.50" fill="#687079"/><rect x="0" y="128.5" width="150" height="5.5" fill="#424850"/><polygon points="-586.14,128.50 -542.03,128.50 -592.27,134.00 -639.96,134.00" fill="#707880"/><polygon points="-497.93,128.50 -453.83,128.50 -496.87,134.00 -544.57,134.00" fill="#707880"/><polygon points="-409.72,128.50 -365.62,128.50 -401.48,134.00 -449.18,134.00" fill="#707880"/><polygon points="-321.51,128.50 -277.41,128.50 -306.09,134.00 -353.79,134.00" fill="#707880"/><polygon points="-233.30,128.50 -189.20,128.50 -210.70,134.00 -258.40,134.00" fill="#707880"/><polygon points="-145.09,128.50 -100.99,128.50 -115.31,134.00 -163.01,134.00" fill="#707880"/><polygon points="-56.88,128.50 -12.78,128.50 -19.92,134.00 -67.62,134.00" fill="#707880"/><polygon points="31.33,128.50 75.43,128.50 75.47,134.00 27.77,134.00" fill="#707880"/><polygon points="119.54,128.50 163.64,128.50 170.86,134.00 123.16,134.00" fill="#707880"/><polygon points="207.75,128.50 251.85,128.50 266.25,134.00 218.55,134.00" fill="#707880"/><polygon points="295.96,128.50 340.06,128.50 361.64,134.00 313.94,134.00" fill="#707880"/><polygon points="384.17,128.50 428.27,128.50 457.03,134.00 409.33,134.00" fill="#707880"/><rect x="0" y="134" width="150" height="5.5" fill="#424850"/><polygon points="-592.27,134.00 -544.57,134.00 -591.21,139.50 -642.50,139.50" fill="#687079"/><polygon points="-496.87,134.00 -449.18,134.00 -488.64,139.50 -539.92,139.50" fill="#687079"/><polygon points="-401.48,134.00 -353.79,134.00 -386.07,139.50 -437.35,139.50" fill="#687079"/><polygon points="-306.09,134.00 -258.40,134.00 -283.50,139.50 -334.78,139.50" fill="#687079"/><polygon points="-210.70,134.00 -163.01,134.00 -180.93,139.50 -232.21,139.50" fill="#687079"/><polygon points="-115.31,134.00 -67.62,134.00 -78.35,139.50 -129.64,139.50" fill="#687079"/><polygon points="-19.92,134.00 27.77,134.00 24.22,139.50 -27.07,139.50" fill="#687079"/><polygon points="75.47,134.00 123.16,134.00 126.79,139.50 75.50,139.50" fill="#687079"/><polygon points="170.86,134.00 218.55,134.00 229.36,139.50 178.07,139.50" fill="#687079"/><polygon points="266.25,134.00 313.94,134.00 331.93,139.50 280.65,139.50" fill="#687079"/><polygon points="361.64,134.00 409.33,134.00 434.50,139.50 383.22,139.50" fill="#687079"/><polygon points="457.03,134.00 504.72,134.00 537.07,139.50 485.79,139.50" fill="#687079"/><rect x="0" y="139.5" width="150" height="5.5" fill="#424850"/><polygon points="-693.78,139.50 -642.50,139.50 -692.73,145.00 -747.60,145.00" fill="#707880"/><polygon points="-591.21,139.50 -539.92,139.50 -582.97,145.00 -637.85,145.00" fill="#707880"/><polygon points="-488.64,139.50 -437.35,139.50 -473.22,145.00 -528.10,145.00" fill="#707880"/><polygon points="-386.07,139.50 -334.78,139.50 -363.47,145.00 -418.35,145.00" fill="#707880"/><polygon points="-283.50,139.50 -232.21,139.50 -253.72,145.00 -308.59,145.00" fill="#707880"/><polygon points="-180.93,139.50 -129.64,139.50 -143.97,145.00 -198.84,145.00" fill="#707880"/><polygon points="-78.35,139.50 -27.07,139.50 -34.21,145.00 -89.09,145.00" fill="#707880"/><polygon points="24.22,139.50 75.50,139.50 75.54,145.00 20.66,145.00" fill="#707880"/><polygon points="126.79,139.50 178.07,139.50 185.29,145.00 130.41,145.00" fill="#707880"/><polygon points="229.36,139.50 280.65,139.50 295.04,145.00 240.17,145.00" fill="#707880"/><polygon points="331.93,139.50 383.22,139.50 404.79,145.00 349.92,145.00" fill="#707880"/><polygon points="434.50,139.50 485.79,139.50 514.55,145.00 459.67,145.00" fill="#707880"/><rect x="0" y="145" width="150" height="6" fill="#424850"/><polygon points="-692.73,145.00 -637.85,145.00 -680.25,151.00 -738.39,151.00" fill="#687079"/><polygon points="-582.97,145.00 -528.10,145.00 -563.97,151.00 -622.11,151.00" fill="#687079"/><polygon points="-473.22,145.00 -418.35,145.00 -447.69,151.00 -505.83,151.00" fill="#687079"/><polygon points="-363.47,145.00 -308.59,145.00 -331.41,151.00 -389.55,151.00" fill="#687079"/><polygon points="-253.72,145.00 -198.84,145.00 -215.13,151.00 -273.27,151.00" fill="#687079"/><polygon points="-143.97,145.00 -89.09,145.00 -98.85,151.00 -156.99,151.00" fill="#687079"/><polygon points="-34.21,145.00 20.66,145.00 17.43,151.00 -40.71,151.00" fill="#687079"/><polygon points="75.54,145.00 130.41,145.00 133.71,151.00 75.57,151.00" fill="#687079"/><polygon points="185.29,145.00 240.17,145.00 249.99,151.00 191.85,151.00" fill="#687079"/><polygon points="295.04,145.00 349.92,145.00 366.27,151.00 308.13,151.00" fill="#687079"/><polygon points="404.79,145.00 459.67,145.00 482.55,151.00 424.41,151.00" fill="#687079"/><polygon points="514.55,145.00 569.42,145.00 598.83,151.00 540.69,151.00" fill="#687079"/><ellipse cx="82" cy="138" rx="55" ry="5" fill="#1e2228" opacity="0.4"/><circle cx="75" cy="74" r="64.5" fill="url(#sph)" filter="url(#nzM)"/></symbol><symbol id="prevS" viewBox="0 0 150 150"><rect x="0" y="0" width="150" height="150" fill="#4c5057"/><polygon points="-210.40,-8.40 -190.00,-8.40 -193.67,8.30 -214.35,8.30" fill="#878b90"/><polygon points="-169.60,-8.40 -149.20,-8.40 -152.30,8.30 -172.98,8.30" fill="#878b90"/><polygon points="-128.80,-8.40 -108.40,-8.40 -110.94,8.30 -131.62,8.30" fill="#878b90"/><polygon points="-88.00,-8.40 -67.60,-8.40 -69.57,8.30 -90.25,8.30" fill="#878b90"/><polygon points="-47.20,-8.40 -26.80,-8.40 -28.21,8.30 -48.89,8.30" fill="#878b90"/><polygon points="-6.40,-8.40 14.00,-8.40 13.16,8.30 -7.53,8.30" fill="#878b90"/><polygon points="34.40,-8.40 54.80,-8.40 54.52,8.30 33.84,8.30" fill="#878b90"/><polygon points="75.20,-8.40 95.60,-8.40 95.88,8.30 75.20,8.30" fill="#878b90"/><polygon points="116.00,-8.40 136.40,-8.40 137.25,8.30 116.57,8.30" fill="#878b90"/><polygon points="156.80,-8.40 177.20,-8.40 178.61,8.30 157.93,8.30" fill="#878b90"/><polygon points="197.60,-8.40 218.00,-8.40 219.98,8.30 199.30,8.30" fill="#878b90"/><polygon points="238.40,-8.40 258.80,-8.40 261.34,8.30 240.66,8.30" fill="#878b90"/><polygon points="-235.03,8.30 -214.35,8.30 -222.29,25.00 -243.54,25.00" fill="#878b90"/><polygon points="-193.67,8.30 -172.98,8.30 -179.79,25.00 -201.04,25.00" fill="#878b90"/><polygon points="-152.30,8.30 -131.62,8.30 -137.29,25.00 -158.54,25.00" fill="#878b90"/><polygon points="-110.94,8.30 -90.25,8.30 -94.79,25.00 -116.04,25.00" fill="#878b90"/><polygon points="-69.57,8.30 -48.89,8.30 -52.29,25.00 -73.54,25.00" fill="#878b90"/><polygon points="-28.21,8.30 -7.53,8.30 -9.79,25.00 -31.04,25.00" fill="#878b90"/><polygon points="13.16,8.30 33.84,8.30 32.71,25.00 11.46,25.00" fill="#878b90"/><polygon points="54.52,8.30 75.20,8.30 75.21,25.00 53.96,25.00" fill="#878b90"/><polygon points="95.88,8.30 116.57,8.30 117.71,25.00 96.46,25.00" fill="#878b90"/><polygon points="137.25,8.30 157.93,8.30 160.21,25.00 138.96,25.00" fill="#878b90"/><polygon points="178.61,8.30 199.30,8.30 202.71,25.00 181.46,25.00" fill="#878b90"/><polygon points="219.98,8.30 240.66,8.30 245.21,25.00 223.96,25.00" fill="#878b90"/><polygon points="-222.29,25.00 -201.04,25.00 -208.42,41.70 -230.24,41.70" fill="#878b90"/><polygon points="-179.79,25.00 -158.54,25.00 -164.78,41.70 -186.60,41.70" fill="#878b90"/><polygon points="-137.29,25.00 -116.04,25.00 -121.15,41.70 -142.96,41.70" fill="#878b90"/><polygon points="-94.79,25.00 -73.54,25.00 -77.51,41.70 -99.33,41.70" fill="#878b90"/><polygon points="-52.29,25.00 -31.04,25.00 -33.88,41.70 -55.69,41.70" fill="#878b90"/><polygon points="-9.79,25.00 11.46,25.00 9.76,41.70 -12.06,41.70" fill="#878b90"/><polygon points="32.71,25.00 53.96,25.00 53.40,41.70 31.58,41.70" fill="#878b90"/><polygon points="75.21,25.00 96.46,25.00 97.03,41.70 75.21,41.70" fill="#878b90"/><polygon points="117.71,25.00 138.96,25.00 140.67,41.70 118.85,41.70" fill="#878b90"/><polygon points="160.21,25.00 181.46,25.00 184.30,41.70 162.49,41.70" fill="#878b90"/><polygon points="202.71,25.00 223.96,25.00 227.94,41.70 206.12,41.70" fill="#878b90"/><polygon points="245.21,25.00 266.46,25.00 271.57,41.70 249.76,41.70" fill="#878b90"/><polygon points="-252.05,41.70 -230.24,41.70 -237.28,56.50 -259.60,56.50" fill="#878b90"/><polygon points="-208.42,41.70 -186.60,41.70 -192.63,56.50 -214.95,56.50" fill="#878b90"/><polygon points="-164.78,41.70 -142.96,41.70 -147.99,56.50 -170.31,56.50" fill="#878b90"/><polygon points="-121.15,41.70 -99.33,41.70 -103.35,56.50 -125.67,56.50" fill="#878b90"/><polygon points="-77.51,41.70 -55.69,41.70 -58.71,56.50 -81.03,56.50" fill="#878b90"/><polygon points="-33.88,41.70 -12.06,41.70 -14.07,56.50 -36.39,56.50" fill="#878b90"/><polygon points="9.76,41.70 31.58,41.70 30.58,56.50 8.26,56.50" fill="#878b90"/><polygon points="53.40,41.70 75.21,41.70 75.22,56.50 52.90,56.50" fill="#878b90"/><polygon points="97.03,41.70 118.85,41.70 119.86,56.50 97.54,56.50" fill="#878b90"/><polygon points="140.67,41.70 162.49,41.70 164.50,56.50 142.18,56.50" fill="#878b90"/><polygon points="184.30,41.70 206.12,41.70 209.14,56.50 186.82,56.50" fill="#878b90"/><polygon points="227.94,41.70 249.76,41.70 253.79,56.50 231.47,56.50" fill="#878b90"/><polygon points="-237.28,56.50 -214.95,56.50 -227.73,71.30 -251.03,71.30" fill="#878b90"/><polygon points="-192.63,56.50 -170.31,56.50 -181.12,71.30 -204.42,71.30" fill="#878b90"/><polygon points="-147.99,56.50 -125.67,56.50 -134.51,71.30 -157.82,71.30" fill="#878b90"/><polygon points="-103.35,56.50 -81.03,56.50 -87.90,71.30 -111.21,71.30" fill="#878b90"/><polygon points="-58.71,56.50 -36.39,56.50 -41.29,71.30 -64.60,71.30" fill="#878b90"/><polygon points="-14.07,56.50 8.26,56.50 5.32,71.30 -17.99,71.30" fill="#878b90"/><polygon points="30.58,56.50 52.90,56.50 51.92,71.30 28.62,71.30" fill="#878b90"/><polygon points="75.22,56.50 97.54,56.50 98.53,71.30 75.23,71.30" fill="#878b90"/><polygon points="119.86,56.50 142.18,56.50 145.14,71.30 121.84,71.30" fill="#878b90"/><polygon points="164.50,56.50 186.82,56.50 191.75,71.30 168.45,71.30" fill="#878b90"/><polygon points="209.14,56.50 231.47,56.50 238.36,71.30 215.06,71.30" fill="#878b90"/><polygon points="253.79,56.50 276.11,56.50 284.97,71.30 261.66,71.30" fill="#878b90"/><polygon points="-274.34,71.30 -251.03,71.30 -262.91,82.40 -287.07,82.40" fill="#878b90"/><polygon points="-227.73,71.30 -204.42,71.30 -214.61,82.40 -238.76,82.40" fill="#878b90"/><polygon points="-181.12,71.30 -157.82,71.30 -166.30,82.40 -190.45,82.40" fill="#878b90"/><polygon points="-134.51,71.30 -111.21,71.30 -117.99,82.40 -142.15,82.40" fill="#878b90"/><polygon points="-87.90,71.30 -64.60,71.30 -69.68,82.40 -93.84,82.40" fill="#878b90"/><polygon points="-41.29,71.30 -17.99,71.30 -21.38,82.40 -45.53,82.40" fill="#878b90"/><polygon points="5.32,71.30 28.62,71.30 26.93,82.40 2.78,82.40" fill="#878b90"/><polygon points="51.92,71.30 75.23,71.30 75.24,82.40 51.08,82.40" fill="#878b90"/><polygon points="98.53,71.30 121.84,71.30 123.54,82.40 99.39,82.40" fill="#878b90"/><polygon points="145.14,71.30 168.45,71.30 171.85,82.40 147.70,82.40" fill="#878b90"/><polygon points="191.75,71.30 215.06,71.30 220.16,82.40 196.00,82.40" fill="#878b90"/><polygon points="238.36,71.30 261.66,71.30 268.47,82.40 244.31,82.40" fill="#878b90"/><polygon points="-262.91,82.40 -238.76,82.40 -248.90,92.60 -273.83,92.60" fill="#878b90"/><polygon points="-214.61,82.40 -190.45,82.40 -199.03,92.60 -223.96,92.60" fill="#878b90"/><polygon points="-166.30,82.40 -142.15,82.40 -149.16,92.60 -174.09,92.60" fill="#878b90"/><polygon points="-117.99,82.40 -93.84,82.40 -99.29,92.60 -124.23,92.60" fill="#878b90"/><polygon points="-69.68,82.40 -45.53,82.40 -49.43,92.60 -74.36,92.60" fill="#878b90"/><polygon points="-21.38,82.40 2.78,82.40 0.44,92.60 -24.49,92.60" fill="#878b90"/><polygon points="26.93,82.40 51.08,82.40 50.31,92.60 25.38,92.60" fill="#878b90"/><polygon points="75.24,82.40 99.39,82.40 100.18,92.60 75.24,92.60" fill="#878b90"/><polygon points="123.54,82.40 147.70,82.40 150.05,92.60 125.11,92.60" fill="#878b90"/><polygon points="171.85,82.40 196.00,82.40 199.91,92.60 174.98,92.60" fill="#878b90"/><polygon points="220.16,82.40 244.31,82.40 249.78,92.60 224.85,92.60" fill="#878b90"/><polygon points="268.47,82.40 292.62,82.40 299.65,92.60 274.72,92.60" fill="#878b90"/><polygon points="-298.76,92.60 -273.83,92.60 -290.88,101.00 -317.04,101.00" fill="#878b90"/><polygon points="-248.90,92.60 -223.96,92.60 -238.58,101.00 -264.73,101.00" fill="#878b90"/><polygon points="-199.03,92.60 -174.09,92.60 -186.27,101.00 -212.42,101.00" fill="#878b90"/><polygon points="-149.16,92.60 -124.23,92.60 -133.97,101.00 -160.12,101.00" fill="#878b90"/><polygon points="-99.29,92.60 -74.36,92.60 -81.66,101.00 -107.81,101.00" fill="#878b90"/><polygon points="-49.43,92.60 -24.49,92.60 -29.35,101.00 -55.51,101.00" fill="#878b90"/><polygon points="0.44,92.60 25.38,92.60 22.95,101.00 -3.20,101.00" fill="#878b90"/><polygon points="50.31,92.60 75.24,92.60 75.26,101.00 49.10,101.00" fill="#878b90"/><polygon points="100.18,92.60 125.11,92.60 127.56,101.00 101.41,101.00" fill="#878b90"/><polygon points="150.05,92.60 174.98,92.60 179.87,101.00 153.71,101.00" fill="#878b90"/><polygon points="199.91,92.60 224.85,92.60 232.17,101.00 206.02,101.00" fill="#878b90"/><polygon points="249.78,92.60 274.72,92.60 284.48,101.00 258.33,101.00" fill="#878b90"/><rect x="0" y="101" width="150" height="6.400000000000006" fill="#424850"/><polygon points="-290.88,101.00 -264.73,101.00 -319.00,107.40 -349.33,107.40" fill="#687079"/><polygon points="-238.58,101.00 -212.42,101.00 -258.34,107.40 -288.67,107.40" fill="#687079"/><polygon points="-186.27,101.00 -160.12,101.00 -197.68,107.40 -228.01,107.40" fill="#687079"/><polygon points="-133.97,101.00 -107.81,101.00 -137.02,107.40 -167.35,107.40" fill="#687079"/><polygon points="-81.66,101.00 -55.51,101.00 -76.36,107.40 -106.69,107.40" fill="#687079"/><polygon points="-29.35,101.00 -3.20,101.00 -15.69,107.40 -46.03,107.40" fill="#687079"/><polygon points="22.95,101.00 49.10,101.00 44.97,107.40 14.64,107.40" fill="#687079"/><polygon points="75.26,101.00 101.41,101.00 105.63,107.40 75.30,107.40" fill="#687079"/><polygon points="127.56,101.00 153.71,101.00 166.29,107.40 135.96,107.40" fill="#687079"/><polygon points="179.87,101.00 206.02,101.00 226.95,107.40 196.62,107.40" fill="#687079"/><polygon points="232.17,101.00 258.33,101.00 287.61,107.40 257.28,107.40" fill="#687079"/><polygon points="284.48,101.00 310.63,101.00 348.27,107.40 317.94,107.40" fill="#687079"/><rect x="0" y="107.4" width="150" height="5.599999999999994" fill="#424850"/><polygon points="-379.66,107.40 -349.33,107.40 -400.48,113.00 -434.46,113.00" fill="#707880"/><polygon points="-319.00,107.40 -288.67,107.40 -332.50,113.00 -366.49,113.00" fill="#707880"/><polygon points="-258.34,107.40 -228.01,107.40 -264.53,113.00 -298.52,113.00" fill="#707880"/><polygon points="-197.68,107.40 -167.35,107.40 -196.56,113.00 -230.54,113.00" fill="#707880"/><polygon points="-137.02,107.40 -106.69,107.40 -128.59,113.00 -162.57,113.00" fill="#707880"/><polygon points="-76.36,107.40 -46.03,107.40 -60.61,113.00 -94.60,113.00" fill="#707880"/><polygon points="-15.69,107.40 14.64,107.40 7.36,113.00 -26.63,113.00" fill="#707880"/><polygon points="44.97,107.40 75.30,107.40 75.33,113.00 41.35,113.00" fill="#707880"/><polygon points="105.63,107.40 135.96,107.40 143.31,113.00 109.32,113.00" fill="#707880"/><polygon points="166.29,107.40 196.62,107.40 211.28,113.00 177.29,113.00" fill="#707880"/><polygon points="226.95,107.40 257.28,107.40 279.25,113.00 245.27,113.00" fill="#707880"/><polygon points="287.61,107.40 317.94,107.40 347.22,113.00 313.24,113.00" fill="#707880"/><rect x="0" y="113" width="150" height="5.5" fill="#424850"/><polygon points="-400.48,113.00 -366.49,113.00 -413.13,118.50 -450.71,118.50" fill="#687079"/><polygon points="-332.50,113.00 -298.52,113.00 -337.98,118.50 -375.55,118.50" fill="#687079"/><polygon points="-264.53,113.00 -230.54,113.00 -262.82,118.50 -300.40,118.50" fill="#687079"/><polygon points="-196.56,113.00 -162.57,113.00 -187.67,118.50 -225.25,118.50" fill="#687079"/><polygon points="-128.59,113.00 -94.60,113.00 -112.52,118.50 -150.09,118.50" fill="#687079"/><polygon points="-60.61,113.00 -26.63,113.00 -37.36,118.50 -74.94,118.50" fill="#687079"/><polygon points="7.36,113.00 41.35,113.00 37.79,118.50 0.21,118.50" fill="#687079"/><polygon points="75.33,113.00 109.32,113.00 112.95,118.50 75.37,118.50" fill="#687079"/><polygon points="143.31,113.00 177.29,113.00 188.10,118.50 150.52,118.50" fill="#687079"/><polygon points="211.28,113.00 245.27,113.00 263.25,118.50 225.68,118.50" fill="#687079"/><polygon points="279.25,113.00 313.24,113.00 338.41,118.50 300.83,118.50" fill="#687079"/><polygon points="347.22,113.00 381.21,113.00 413.56,118.50 375.98,118.50" fill="#687079"/><rect x="0" y="118.5" width="150" height="5.0" fill="#424850"/><polygon points="-488.28,118.50 -450.71,118.50 -496.37,123.50 -537.21,123.50" fill="#707880"/><polygon points="-413.13,118.50 -375.55,118.50 -414.69,123.50 -455.53,123.50" fill="#707880"/><polygon points="-337.98,118.50 -300.40,118.50 -333.01,123.50 -373.85,123.50" fill="#707880"/><polygon points="-262.82,118.50 -225.25,118.50 -251.33,123.50 -292.17,123.50" fill="#707880"/><polygon points="-187.67,118.50 -150.09,118.50 -169.64,123.50 -210.49,123.50" fill="#707880"/><polygon points="-112.52,118.50 -74.94,118.50 -87.96,123.50 -128.80,123.50" fill="#707880"/><polygon points="-37.36,118.50 0.21,118.50 -6.28,123.50 -47.12,123.50" fill="#707880"/><polygon points="37.79,118.50 75.37,118.50 75.40,123.50 34.56,123.50" fill="#707880"/><polygon points="112.95,118.50 150.52,118.50 157.08,123.50 116.24,123.50" fill="#707880"/><polygon points="188.10,118.50 225.68,118.50 238.76,123.50 197.92,123.50" fill="#707880"/><polygon points="263.25,118.50 300.83,118.50 320.45,123.50 279.60,123.50" fill="#707880"/><polygon points="338.41,118.50 375.98,118.50 402.13,123.50 361.29,123.50" fill="#707880"/><rect x="0" y="123.5" width="150" height="5.0" fill="#424850"/><polygon points="-496.37,123.50 -455.53,123.50 -497.93,128.50 -542.03,128.50" fill="#687079"/><polygon points="-414.69,123.50 -373.85,123.50 -409.72,128.50 -453.83,128.50" fill="#687079"/><polygon points="-333.01,123.50 -292.17,123.50 -321.51,128.50 -365.62,128.50" fill="#687079"/><polygon points="-251.33,123.50 -210.49,123.50 -233.30,128.50 -277.41,128.50" fill="#687079"/><polygon points="-169.64,123.50 -128.80,123.50 -145.09,128.50 -189.20,128.50" fill="#687079"/><polygon points="-87.96,123.50 -47.12,123.50 -56.88,128.50 -100.99,128.50" fill="#687079"/><polygon points="-6.28,123.50 34.56,123.50 31.33,128.50 -12.78,128.50" fill="#687079"/><polygon points="75.40,123.50 116.24,123.50 119.54,128.50 75.43,128.50" fill="#687079"/><polygon points="157.08,123.50 197.92,123.50 207.75,128.50 163.64,128.50" fill="#687079"/><polygon points="238.76,123.50 279.60,123.50 295.96,128.50 251.85,128.50" fill="#687079"/><polygon points="320.45,123.50 361.29,123.50 384.17,128.50 340.06,128.50" fill="#687079"/><polygon points="402.13,123.50 442.97,123.50 472.38,128.50 428.27,128.50" fill="#687079"/><rect x="0" y="128.5" width="150" height="5.5" fill="#424850"/><polygon points="-586.14,128.50 -542.03,128.50 -592.27,134.00 -639.96,134.00" fill="#707880"/><polygon points="-497.93,128.50 -453.83,128.50 -496.87,134.00 -544.57,134.00" fill="#707880"/><polygon points="-409.72,128.50 -365.62,128.50 -401.48,134.00 -449.18,134.00" fill="#707880"/><polygon points="-321.51,128.50 -277.41,128.50 -306.09,134.00 -353.79,134.00" fill="#707880"/><polygon points="-233.30,128.50 -189.20,128.50 -210.70,134.00 -258.40,134.00" fill="#707880"/><polygon points="-145.09,128.50 -100.99,128.50 -115.31,134.00 -163.01,134.00" fill="#707880"/><polygon points="-56.88,128.50 -12.78,128.50 -19.92,134.00 -67.62,134.00" fill="#707880"/><polygon points="31.33,128.50 75.43,128.50 75.47,134.00 27.77,134.00" fill="#707880"/><polygon points="119.54,128.50 163.64,128.50 170.86,134.00 123.16,134.00" fill="#707880"/><polygon points="207.75,128.50 251.85,128.50 266.25,134.00 218.55,134.00" fill="#707880"/><polygon points="295.96,128.50 340.06,128.50 361.64,134.00 313.94,134.00" fill="#707880"/><polygon points="384.17,128.50 428.27,128.50 457.03,134.00 409.33,134.00" fill="#707880"/><rect x="0" y="134" width="150" height="5.5" fill="#424850"/><polygon points="-592.27,134.00 -544.57,134.00 -591.21,139.50 -642.50,139.50" fill="#687079"/><polygon points="-496.87,134.00 -449.18,134.00 -488.64,139.50 -539.92,139.50" fill="#687079"/><polygon points="-401.48,134.00 -353.79,134.00 -386.07,139.50 -437.35,139.50" fill="#687079"/><polygon points="-306.09,134.00 -258.40,134.00 -283.50,139.50 -334.78,139.50" fill="#687079"/><polygon points="-210.70,134.00 -163.01,134.00 -180.93,139.50 -232.21,139.50" fill="#687079"/><polygon points="-115.31,134.00 -67.62,134.00 -78.35,139.50 -129.64,139.50" fill="#687079"/><polygon points="-19.92,134.00 27.77,134.00 24.22,139.50 -27.07,139.50" fill="#687079"/><polygon points="75.47,134.00 123.16,134.00 126.79,139.50 75.50,139.50" fill="#687079"/><polygon points="170.86,134.00 218.55,134.00 229.36,139.50 178.07,139.50" fill="#687079"/><polygon points="266.25,134.00 313.94,134.00 331.93,139.50 280.65,139.50" fill="#687079"/><polygon points="361.64,134.00 409.33,134.00 434.50,139.50 383.22,139.50" fill="#687079"/><polygon points="457.03,134.00 504.72,134.00 537.07,139.50 485.79,139.50" fill="#687079"/><rect x="0" y="139.5" width="150" height="5.5" fill="#424850"/><polygon points="-693.78,139.50 -642.50,139.50 -692.73,145.00 -747.60,145.00" fill="#707880"/><polygon points="-591.21,139.50 -539.92,139.50 -582.97,145.00 -637.85,145.00" fill="#707880"/><polygon points="-488.64,139.50 -437.35,139.50 -473.22,145.00 -528.10,145.00" fill="#707880"/><polygon points="-386.07,139.50 -334.78,139.50 -363.47,145.00 -418.35,145.00" fill="#707880"/><polygon points="-283.50,139.50 -232.21,139.50 -253.72,145.00 -308.59,145.00" fill="#707880"/><polygon points="-180.93,139.50 -129.64,139.50 -143.97,145.00 -198.84,145.00" fill="#707880"/><polygon points="-78.35,139.50 -27.07,139.50 -34.21,145.00 -89.09,145.00" fill="#707880"/><polygon points="24.22,139.50 75.50,139.50 75.54,145.00 20.66,145.00" fill="#707880"/><polygon points="126.79,139.50 178.07,139.50 185.29,145.00 130.41,145.00" fill="#707880"/><polygon points="229.36,139.50 280.65,139.50 295.04,145.00 240.17,145.00" fill="#707880"/><polygon points="331.93,139.50 383.22,139.50 404.79,145.00 349.92,145.00" fill="#707880"/><polygon points="434.50,139.50 485.79,139.50 514.55,145.00 459.67,145.00" fill="#707880"/><rect x="0" y="145" width="150" height="6" fill="#424850"/><polygon points="-692.73,145.00 -637.85,145.00 -680.25,151.00 -738.39,151.00" fill="#687079"/><polygon points="-582.97,145.00 -528.10,145.00 -563.97,151.00 -622.11,151.00" fill="#687079"/><polygon points="-473.22,145.00 -418.35,145.00 -447.69,151.00 -505.83,151.00" fill="#687079"/><polygon points="-363.47,145.00 -308.59,145.00 -331.41,151.00 -389.55,151.00" fill="#687079"/><polygon points="-253.72,145.00 -198.84,145.00 -215.13,151.00 -273.27,151.00" fill="#687079"/><polygon points="-143.97,145.00 -89.09,145.00 -98.85,151.00 -156.99,151.00" fill="#687079"/><polygon points="-34.21,145.00 20.66,145.00 17.43,151.00 -40.71,151.00" fill="#687079"/><polygon points="75.54,145.00 130.41,145.00 133.71,151.00 75.57,151.00" fill="#687079"/><polygon points="185.29,145.00 240.17,145.00 249.99,151.00 191.85,151.00" fill="#687079"/><polygon points="295.04,145.00 349.92,145.00 366.27,151.00 308.13,151.00" fill="#687079"/><polygon points="404.79,145.00 459.67,145.00 482.55,151.00 424.41,151.00" fill="#687079"/><polygon points="514.55,145.00 569.42,145.00 598.83,151.00 540.69,151.00" fill="#687079"/><ellipse cx="82" cy="138" rx="55" ry="5" fill="#1e2228" opacity="0.4"/><circle cx="75" cy="74" r="64.5" fill="url(#sph)"/></symbol>
</defs></svg>
<div style="position:absolute;left:0;top:0;width:522px;height:810px;background:#1b1b1b;overflow:hidden"><svg style="position:absolute;left:0;top:0" width="522" height="810"><rect x="29" y="0" width="1" height="810" fill="#212121"/><rect x="67" y="0" width="1" height="810" fill="#212121"/><rect x="143" y="0" width="1" height="810" fill="#212121"/><rect x="180" y="0" width="1" height="810" fill="#212121"/><rect x="218" y="0" width="1" height="810" fill="#212121"/><rect x="294" y="0" width="1" height="810" fill="#212121"/><rect x="332" y="0" width="1" height="810" fill="#212121"/><rect x="369" y="0" width="1" height="810" fill="#212121"/><rect x="444" y="0" width="1" height="810" fill="#212121"/><rect x="483" y="0" width="1" height="810" fill="#212121"/><rect x="0" y="46" width="522" height="1" fill="#212121"/><rect x="0" y="85" width="522" height="1" fill="#212121"/><rect x="0" y="122" width="522" height="1" fill="#212121"/><rect x="0" y="198" width="522" height="1" fill="#212121"/><rect x="0" y="236" width="522" height="1" fill="#212121"/><rect x="0" y="274" width="522" height="1" fill="#212121"/><rect x="0" y="349" width="522" height="1" fill="#212121"/><rect x="0" y="387" width="522" height="1" fill="#212121"/><rect x="0" y="425" width="522" height="1" fill="#212121"/><rect x="0" y="500" width="522" height="1" fill="#212121"/><rect x="0" y="538" width="522" height="1" fill="#212121"/><rect x="0" y="575" width="522" height="1" fill="#212121"/><rect x="0" y="651" width="522" height="1" fill="#212121"/><rect x="0" y="689" width="522" height="1" fill="#212121"/><rect x="0" y="726" width="522" height="1" fill="#212121"/><rect x="0" y="802" width="522" height="1" fill="#212121"/><rect x="105" y="0" width="2" height="810" fill="#262626"/><rect x="255" y="0" width="2" height="810" fill="#262626"/><rect x="406" y="0" width="2" height="810" fill="#262626"/><rect x="0" y="160" width="522" height="1" fill="#262626"/><rect x="0" y="311" width="522" height="2" fill="#262626"/><rect x="0" y="462" width="522" height="2" fill="#262626"/><rect x="0" y="612" width="522" height="2" fill="#262626"/><rect x="0" y="763" width="522" height="2" fill="#262626"/></svg></div><div style="position:absolute;left:0px;top:0px;width:522px;height:35px;background:#2b2b2b;border-radius:0px;"></div><svg style="position:absolute;left:0;top:0" width="70" height="34"><rect x="15" y="6.5" width="2" height="21" fill="#9a9a9a"/><rect x="6" y="16" width="21" height="2" fill="#9a9a9a"/><path d="M38,10 L55,10 L59.5,17 L55,24 L38,24 Z" fill="none" stroke="#9a9a9a" stroke-width="2"/></svg><div style="position:absolute;left:72.22px;top:10.30px;font-size:15px;line-height:15px;color:#e6e6e6;white-space:nowrap;transform:scaleX(1.0625);transform-origin:0 0;">Node</div><div style="position:absolute;left:69px;top:31px;width:47px;height:2px;background:#6f95c2;border-radius:0px;"></div><div style="position:absolute;left:254px;top:6px;width:258px;height:24px;background:#1d1d1d;border-radius:6px;"></div><div style="position:absolute;left:264.59px;top:11.15px;font-size:14px;line-height:14px;color:#767676;white-space:nowrap;font-style:italic;transform:scaleX(0.9731);transform-origin:0 0;">Reveal</div><div style="position:absolute;left:520px;top:35px;width:2px;height:775px;background:#181818;border-radius:0px;"></div><div style="position:absolute;left:522px;top:0px;width:1px;height:810px;background:#2e2e2e;border-radius:0px;"></div><div style="position:absolute;left:523px;top:0px;width:1px;height:810px;background:#222222;border-radius:0px;"></div><svg style="position:absolute;left:200px;top:525px" width="106" height="8"><defs><linearGradient id="wg" x1="0" x2="1"><stop offset="0" stop-color="#5e968a"/><stop offset="0.7" stop-color="#5a9390"/><stop offset="1" stop-color="#4a7f98"/></linearGradient></defs><path d="M1,3.3 L105,4" stroke="url(#wg)" stroke-width="1.6" fill="none"/></svg><div style="position:absolute;left:50px;top:380px;width:151px;height:292px;border-radius:8px;background:#333333"></div><svg style="position:absolute;left:83px;top:389px;border-radius:5px" width="85" height="85"><use href="#prevM"/></svg><div style="position:absolute;left:50px;top:484px;width:151px;height:28px;background:#727272"></div><svg style="position:absolute;left:53.99999999999999px;top:488px" width="20" height="20" viewBox="0 0 20 20"><circle cx="10.1" cy="10" r="7.9" fill="#9c9c9c"/><path d="M12.6,7.2 C12.2,6.4 11.3,6.1 10.2,6.1 C8.9,6.1 8.0,6.7 8.0,7.7 C8.0,10.0 12.7,9.0 12.7,11.1 C12.7,12.1 11.7,12.7 10.3,12.7 C9.1,12.7 8.2,12.3 7.8,11.5" fill="none" stroke="#6e6e6e" stroke-width="2.3" stroke-linecap="butt"/></svg><svg style="position:absolute;left:80.9px;top:490.7px" width="14" height="14" viewBox="0 0 14 14">
<rect x="0" y="0" width="14" height="14" rx="1.8" fill="#e2e2e2"/>
<path d="M2,11.7 L4.2,8.3 L6.2,10.2 L8.9,7.0 L11.7,11.7 Z" fill="#6e6e6e" stroke="#6e6e6e" stroke-width="0.6" stroke-linejoin="round"/>
</svg><svg style="position:absolute;left:180px;top:491px" width="15" height="15" viewBox="0 0 15 15">
<rect x="0" y="0" width="14" height="14" rx="2.2" fill="#e2e2e2"/>
<rect x="0" y="4.2" width="14" height="1" fill="#727272"/>
<rect x="0" y="9.2" width="14" height="1" fill="#727272"/>
</svg><svg style="position:absolute;left:52.2px;top:353.6px" width="24" height="24" viewBox="-12 -12 24 24">
<circle cx="0" cy="0" r="11.3" fill="#b4b6b6"/>
<path d="M-9.6,1.2 A9.7,9.7 0 0 1 -1.2,-9.2 C-3.6,-6 -4.2,-2.5 -3.2,3.2 C-5.5,2.8 -7.8,2.2 -9.6,1.2 Z" fill="#1b1b1b"/>
<path d="M9.5,2.8 A9.7,9.7 0 0 1 0.3,9.6 C-1.2,7.5 -2.3,5.4 -3.1,3.1 C1.5,4.2 5.8,4.0 9.5,2.8 Z" fill="#1b1b1b"/>
</svg><div style="position:absolute;left:78.03px;top:339.60px;font-size:13px;line-height:13px;color:#c2c2c2;white-space:nowrap;transform:scaleX(1.0307);transform-origin:0 0;">BSDF</div><div style="position:absolute;left:78.06px;top:359.96px;font-size:16px;line-height:16px;color:#f2f2f2;white-space:nowrap;transform:scaleX(1.0480);transform-origin:0 0;">Diffuse</div><div style="position:absolute;left:151.80px;top:522.70px;font-size:13px;line-height:13px;color:#d6d6d6;white-space:nowrap;transform:scaleX(0.9584);transform-origin:0 0;">Result</div><div style="position:absolute;left:195px;top:523px;width:12px;height:12px;border-radius:50%;background:#5b9282"></div><div style="position:absolute;left:44px;top:546px;width:12px;height:12px;border-radius:50%;background:#dbb35a"></div><svg style="position:absolute;left:63.099999999999994px;top:547px" width="8" height="10" viewBox="0 0 8 10"><path d="M2,1.9 L5.6,5 L2,8.1" fill="none" stroke="#9a9a9a" stroke-width="1.5"/></svg><div style="position:absolute;left:78.25px;top:545.90px;font-size:13px;line-height:13px;color:#d6d6d6;white-space:nowrap;">Color</div><div style="position:absolute;left:44px;top:569.8px;width:12px;height:12px;border-radius:50%;background:#c6c6c6"></div><div style="position:absolute;left:77.73px;top:569.70px;font-size:13px;line-height:13px;color:#d6d6d6;white-space:nowrap;">Intensity</div><div style="position:absolute;left:44px;top:593.6px;width:12px;height:12px;border-radius:50%;background:#c6c6c6"></div><div style="position:absolute;left:77.86px;top:593.50px;font-size:13px;line-height:13px;color:#d6d6d6;white-space:nowrap;">Roughness</div><div style="position:absolute;left:44px;top:617px;width:12px;height:12px;border-radius:50%;background:#a48edc"></div><svg style="position:absolute;left:63.099999999999994px;top:618px" width="8" height="10" viewBox="0 0 8 10"><path d="M2,1.9 L5.6,5 L2,8.1" fill="none" stroke="#9a9a9a" stroke-width="1.5"/></svg><div style="position:absolute;left:77.86px;top:616.90px;font-size:13px;line-height:13px;color:#d6d6d6;white-space:nowrap;">Normal</div><div style="position:absolute;left:44px;top:641px;width:12px;height:12px;border-radius:50%;background:#c6c6c6"></div><div style="position:absolute;left:77.86px;top:640.90px;font-size:13px;line-height:13px;color:#d6d6d6;white-space:nowrap;">Normal Strength</div><div style="position:absolute;left:305px;top:357px;width:151px;height:339px;border-radius:8px;background:#333333"></div><svg style="position:absolute;left:338px;top:366px;border-radius:5px" width="85" height="85"><use href="#prevM"/></svg><div style="position:absolute;left:305px;top:461px;width:151px;height:28px;background:#727272"></div><svg style="position:absolute;left:309.0px;top:465px" width="20" height="20" viewBox="0 0 20 20"><circle cx="10.1" cy="10" r="7.9" fill="#9c9c9c"/><path d="M12.6,7.2 C12.2,6.4 11.3,6.1 10.2,6.1 C8.9,6.1 8.0,6.7 8.0,7.7 C8.0,10.0 12.7,9.0 12.7,11.1 C12.7,12.1 11.7,12.7 10.3,12.7 C9.1,12.7 8.2,12.3 7.8,11.5" fill="none" stroke="#6e6e6e" stroke-width="2.3" stroke-linecap="butt"/></svg><svg style="position:absolute;left:335.9px;top:467.7px" width="14" height="14" viewBox="0 0 14 14">
<rect x="0" y="0" width="14" height="14" rx="1.8" fill="#e2e2e2"/>
<path d="M2,11.7 L4.2,8.3 L6.2,10.2 L8.9,7.0 L11.7,11.7 Z" fill="#6e6e6e" stroke="#6e6e6e" stroke-width="0.6" stroke-linejoin="round"/>
</svg><svg style="position:absolute;left:435px;top:468px" width="15" height="15" viewBox="0 0 15 15">
<rect x="0" y="0" width="14" height="14" rx="2.2" fill="#e2e2e2"/>
<rect x="0" y="4.2" width="14" height="1" fill="#727272"/>
<rect x="0" y="9.2" width="14" height="1" fill="#727272"/>
</svg><svg style="position:absolute;left:307.4px;top:330.5px" width="24" height="24" viewBox="-12 -12 24 24">
<circle cx="0" cy="0" r="11.3" fill="#b4b6b6"/>
<path d="M-9.6,1.2 A9.7,9.7 0 0 1 -1.2,-9.2 C-3.6,-6 -4.2,-2.5 -3.2,3.2 C-5.5,2.8 -7.8,2.2 -9.6,1.2 Z" fill="#1b1b1b"/>
<path d="M9.5,2.8 A9.7,9.7 0 0 1 0.3,9.6 C-1.2,7.5 -2.3,5.4 -3.1,3.1 C1.5,4.2 5.8,4.0 9.5,2.8 Z" fill="#1b1b1b"/>
</svg><div style="position:absolute;left:332.84px;top:336.86px;font-size:16px;line-height:16px;color:#f2f2f2;white-space:nowrap;transform:scaleX(1.0649);transform-origin:0 0;">Material</div><div style="position:absolute;left:299px;top:499.4px;width:12px;height:12px;border-radius:50%;background:#e4e4e4"></div><svg style="position:absolute;left:314.5px;top:497.4px" width="14" height="14" viewBox="0 0 14 14"><path d="M4.00,5.55 L7,8.45 L10.00,5.55" fill="none" stroke="#9a9a9a" stroke-width="1.5"/></svg><div style="position:absolute;left:333.12px;top:499.70px;font-size:13px;line-height:13px;color:#d6d6d6;white-space:nowrap;">Surface</div><div style="position:absolute;left:299px;top:523px;width:12px;height:12px;border-radius:50%;background:#e4e4e4"></div><svg style="position:absolute;left:332.1px;top:523.8px" width="8" height="10" viewBox="0 0 8 10"><path d="M2,1.9 L5.6,5 L2,8.1" fill="none" stroke="#9a9a9a" stroke-width="1.5"/></svg><div style="position:absolute;left:346.96px;top:523.30px;font-size:13px;line-height:13px;color:#d6d6d6;white-space:nowrap;">Diffuse</div><div style="position:absolute;left:299px;top:546.9px;width:12px;height:12px;border-radius:50%;background:#dbb35a"></div><svg style="position:absolute;left:318px;top:547.9px" width="8" height="10" viewBox="0 0 8 10"><path d="M2,1.9 L5.6,5 L2,8.1" fill="none" stroke="#9a9a9a" stroke-width="1.5"/></svg><div style="position:absolute;left:332.66px;top:547.20px;font-size:13px;line-height:13px;color:#d6d6d6;white-space:nowrap;">Emission</div><div style="position:absolute;left:299px;top:570.5px;width:12px;height:12px;border-radius:50%;background:#c4c4c4"></div><div style="position:absolute;left:333.70px;top:570.80px;font-size:13px;line-height:13px;color:#d6d6d6;white-space:nowrap;">Alpha</div><div style="position:absolute;left:299px;top:593.8px;width:12px;height:12px;border-radius:50%;background:#a48edc"></div><svg style="position:absolute;left:318px;top:594.8px" width="8" height="10" viewBox="0 0 8 10"><path d="M2,1.9 L5.6,5 L2,8.1" fill="none" stroke="#9a9a9a" stroke-width="1.5"/></svg><div style="position:absolute;left:332.66px;top:594.10px;font-size:13px;line-height:13px;color:#d6d6d6;white-space:nowrap;">Normal</div><div style="position:absolute;left:299px;top:617.4px;width:12px;height:12px;border-radius:50%;background:#a48edc"></div><svg style="position:absolute;left:318px;top:618.4px" width="8" height="10" viewBox="0 0 8 10"><path d="M2,1.9 L5.6,5 L2,8.1" fill="none" stroke="#9a9a9a" stroke-width="1.5"/></svg><div style="position:absolute;left:332.66px;top:617.70px;font-size:13px;line-height:13px;color:#d6d6d6;white-space:nowrap;">Displacement</div><div style="position:absolute;left:299px;top:641px;width:12px;height:12px;border-radius:50%;background:#e4e4e4"></div><div style="position:absolute;left:333.70px;top:641.30px;font-size:13px;line-height:13px;color:#d6d6d6;white-space:nowrap;">AOV</div><div style="position:absolute;left:299px;top:664.7px;width:12px;height:12px;border-radius:50%;background:#5a9fd6"></div><div style="position:absolute;left:333.05px;top:665.00px;font-size:13px;line-height:13px;color:#d6d6d6;white-space:nowrap;">Context</div><svg style="position:absolute;left:318px;top:510px" width="14" height="22"><path d="M3.5,1 L3.5,11.5 C3.5,16 6.5,18.5 10.5,18.5" fill="none" stroke="#5e5e5e" stroke-width="1.1"/></svg><div style="position:absolute;left:5px;top:746px;width:125px;height:62px;background:rgba(90,90,90,0.45);border-radius:10px;"></div><div style="position:absolute;left:10.74px;top:755.47px;font-size:13.5px;line-height:13.5px;color:#d0d0d0;white-space:nowrap;transform:scaleX(1.0760);transform-origin:0 0;">None</div><div style="position:absolute;left:524px;top:0px;width:440px;height:810px;background:#2b2b2b;border-radius:0px;"></div><div style="position:absolute;left:928px;top:-0.5px;width:39px;height:26.5px;background:#313131;border-radius:13px;"></div><div style="position:absolute;left:531px;top:0;width:28px;height:27px;overflow:hidden"><svg style="position:absolute;left:-1.5px;top:-1px" width="29" height="29"><use href="#prevS"/></svg></div><div style="position:absolute;left:563.77px;top:5.30px;font-size:15px;line-height:15px;color:#b0b0b0;white-space:nowrap;transform:scaleX(1.0256);transform-origin:0 0;">Material [Node]</div><div style="position:absolute;left:534px;top:32px;width:61px;height:26px;background:#3a3c3c;border-radius:5px;"></div><div style="position:absolute;left:547.50px;top:38.47px;font-size:14.8px;line-height:14.8px;color:#d6d6d6;white-space:nowrap;transform:scaleX(0.9327);transform-origin:0 0;">Basic</div><div style="position:absolute;left:600px;top:32px;width:69px;height:26px;background:#535a99;border-radius:5px;"></div><div style="position:absolute;left:613.09px;top:38.47px;font-size:14.8px;line-height:14.8px;color:#e6e6e6;white-space:nowrap;transform:scaleX(1.0551);transform-origin:0 0;">Inputs</div><div style="position:absolute;left:674px;top:32px;width:80px;height:26px;background:#535a99;border-radius:5px;"></div><div style="position:absolute;left:687.04px;top:38.47px;font-size:14.8px;line-height:14.8px;color:#e6e6e6;white-space:nowrap;transform:scaleX(1.0285);transform-origin:0 0;">Context</div><div style="position:absolute;left:759px;top:32px;width:106px;height:26px;background:#3a3c3c;border-radius:5px;"></div><div style="position:absolute;left:771.46px;top:38.47px;font-size:14.8px;line-height:14.8px;color:#d6d6d6;white-space:nowrap;transform:scaleX(1.0811);transform-origin:0 0;">Illumination</div><div style="position:absolute;left:870px;top:32px;width:88px;height:26px;background:#3a3c3c;border-radius:5px;"></div><div style="position:absolute;left:883.52px;top:38.47px;font-size:14.8px;line-height:14.8px;color:#d6d6d6;white-space:nowrap;transform:scaleX(1.0485);transform-origin:0 0;">Viewport</div><div style="position:absolute;left:534px;top:63px;width:71px;height:26px;background:#3a3c3c;border-radius:5px;"></div><div style="position:absolute;left:548.60px;top:69.67px;font-size:14.8px;line-height:14.8px;color:#d6d6d6;white-space:nowrap;transform:scaleX(0.9738);transform-origin:0 0;">Assign</div><svg style="position:absolute;left:534px;top:102px" width="150" height="150"><use href="#prev"/></svg><div style="position:absolute;left:533.51px;top:262.46px;font-size:16px;line-height:16px;color:#ececec;white-space:nowrap;transform:scaleX(1.0361);transform-origin:0 0;">Inputs</div><div style="position:absolute;left:534px;top:296px;width:93px;height:27px;background:#3a3a3a;border-radius:13.5px;"></div><div style="position:absolute;left:566.80px;top:301.73px;font-size:14.5px;line-height:14.5px;color:#e0e0e0;white-space:nowrap;transform:scaleX(1.0777);transform-origin:0 0;">Add</div><div style="position:absolute;left:636px;top:299px;width:21px;height:21px;border-radius:50%;background:#3a3a3a"></div><svg style="position:absolute;left:641px;top:307px" width="11" height="7"><path d="M0.8,0.7 L10.2,0.7 L5.5,6.2 Z" fill="#c4c4c4"/></svg><div style="position:absolute;left:667px;top:296px;width:92px;height:27px;background:#303030;border-radius:13.5px;"></div><div style="position:absolute;left:685.05px;top:301.93px;font-size:14.5px;line-height:14.5px;color:#6a6a6a;white-space:nowrap;transform:scaleX(0.9923);transform-origin:0 0;">Remove</div><div style="position:absolute;left:769px;top:296px;width:92px;height:27px;background:#303030;border-radius:13.5px;"></div><div style="position:absolute;left:797.26px;top:301.73px;font-size:14.5px;line-height:14.5px;color:#6a6a6a;white-space:nowrap;transform:scaleX(1.0232);transform-origin:0 0;">Copy</div><div style="position:absolute;left:872px;top:296px;width:92px;height:27px;background:#303030;border-radius:13.5px;"></div><div style="position:absolute;left:899.38px;top:301.73px;font-size:14.5px;line-height:14.5px;color:#6a6a6a;white-space:nowrap;transform:scaleX(0.9678);transform-origin:0 0;">Paste</div><svg style="position:absolute;left:536px;top:339.3px" width="17" height="13" viewBox="0 0 17 13"><path d="M0.2,6.4 C2.3,-2.0 14.7,-2.0 16.8,6.4 C14.7,14.8 2.3,14.8 0.2,6.4 Z" fill="#8e8e8e"/><ellipse cx="8.5" cy="6.4" rx="3.6" ry="4.0" fill="#2b2b2b"/><ellipse cx="8.5" cy="6.4" rx="2.3" ry="2.7" fill="#8e8e8e"/></svg><div style="position:absolute;left:562.38px;top:338.51px;font-size:14.4px;line-height:14.4px;color:#bababa;white-space:nowrap;transform:scaleX(1.0615);transform-origin:0 0;">Diffuse</div><div style="position:absolute;left:620px;top:343.5px;width:8px;height:1.6000000000000227px;background:#c4c4c4;border-radius:0px;"></div><div style="position:absolute;left:624.5px;top:338.8px;width:11px;height:11px;border-radius:50%;background:#c4c4c4"></div><div style="position:absolute;left:646px;top:333px;width:82px;height:25.5px;background:#1c1c1c;border-radius:4px;"></div><div style="position:absolute;left:666.92px;top:339.15px;font-size:14px;line-height:14px;color:#e6e6e6;white-space:nowrap;transform:scaleX(1.0275);transform-origin:0 0;">100 %</div><div style="position:absolute;left:733px;top:341.9px;width:240px;height:5.0px;background:#565b9b;border-radius:2.5px;"></div><svg style="position:absolute;left:960.5px;top:336.5px" width="10" height="16"><path d="M0.5,3 L2.5,0.5 L10,0.5 L10,15.5 L2.5,15.5 L0.5,13 Z" fill="#c4c4c4"/></svg><div style="position:absolute;left:531px;top:363px;width:433px;height:1px;background:#363636;border-radius:0px;"></div><div style="position:absolute;left:561.24px;top:376.81px;font-size:14.4px;line-height:14.4px;color:#bababa;white-space:nowrap;transform:scaleX(1.0053);transform-origin:0 0;">Emission</div><svg style="position:absolute;left:667px;top:376.3px" width="14" height="14"><circle cx="7" cy="7" r="4.35" fill="none" stroke="#bdbdbd" stroke-width="1.8"/></svg><div style="position:absolute;left:531px;top:402px;width:433px;height:1px;background:#363636;border-radius:0px;"></div><div style="position:absolute;left:532.4px;top:410.4px;width:20px;height:20px;border-radius:50%;background:#2e2f2f"></div><svg style="position:absolute;left:535.4px;top:413.4px" width="14" height="14"><path d="M7,1.8 L12.2,7 L7,12.2 L1.8,7 Z" fill="none" stroke="#b4b4b4" stroke-width="1.5"/></svg><div style="position:absolute;left:561.13px;top:414.81px;font-size:14.4px;line-height:14.4px;color:#bababa;white-space:nowrap;transform:scaleX(1.0176);transform-origin:0 0;">Layer Alpha</div><svg style="position:absolute;left:667px;top:413.4px" width="14" height="14"><circle cx="7" cy="7" r="4.35" fill="none" stroke="#bdbdbd" stroke-width="1.8"/></svg><div style="position:absolute;left:696.2px;top:414.1px;width:10.8px;height:10.8px;border-radius:3px;border:2.5px solid #6c6c6c"></div><div style="position:absolute;left:562.30px;top:443.81px;font-size:14.4px;line-height:14.4px;color:#bababa;white-space:nowrap;transform:scaleX(1.0057);transform-origin:0 0;">Alpha</div><svg style="position:absolute;left:667px;top:442.3px" width="14" height="14"><circle cx="7" cy="7" r="4.35" fill="none" stroke="#bdbdbd" stroke-width="1.8"/></svg><div style="position:absolute;left:531px;top:468px;width:433px;height:1px;background:#363636;border-radius:0px;"></div><div style="position:absolute;left:532.5px;top:476.9px;width:20px;height:20px;border-radius:50%;background:#2e2f2f"></div><svg style="position:absolute;left:535.5px;top:479.9px" width="14" height="14"><path d="M7,1.8 L12.2,7 L7,12.2 L1.8,7 Z" fill="none" stroke="#b4b4b4" stroke-width="1.5"/></svg><div style="position:absolute;left:562.01px;top:480.51px;font-size:14.4px;line-height:14.4px;color:#bababa;white-space:nowrap;">Transparent</div><svg style="position:absolute;left:667px;top:480px" width="14" height="14"><circle cx="7" cy="7" r="4.35" fill="none" stroke="#bdbdbd" stroke-width="1.8"/></svg><div style="position:absolute;left:696.2px;top:480.1px;width:10.8px;height:10.8px;border-radius:3px;border:2.5px solid #6c6c6c"></div><div style="position:absolute;left:531px;top:505px;width:433px;height:1px;background:#363636;border-radius:0px;"></div><div style="position:absolute;left:561.15px;top:518.81px;font-size:14.4px;line-height:14.4px;color:#bababa;white-space:nowrap;transform:scaleX(1.0885);transform-origin:0 0;">Normal</div><svg style="position:absolute;left:667px;top:517.5px" width="14" height="14"><circle cx="7" cy="7" r="4.35" fill="none" stroke="#bdbdbd" stroke-width="1.8"/></svg><div style="position:absolute;left:531px;top:543px;width:433px;height:1px;background:#363636;border-radius:0px;"></div><div style="position:absolute;left:561.21px;top:556.81px;font-size:14.4px;line-height:14.4px;color:#bababa;white-space:nowrap;transform:scaleX(1.0306);transform-origin:0 0;">Displacement</div><svg style="position:absolute;left:667px;top:556px" width="14" height="14"><circle cx="7" cy="7" r="4.35" fill="none" stroke="#bdbdbd" stroke-width="1.8"/></svg><div style="position:absolute;left:531px;top:582px;width:433px;height:1px;background:#363636;border-radius:0px;"></div><svg style="position:absolute;left:542.5px;top:591px" width="14" height="14" viewBox="0 0 14 14"><path d="M2.80,4.50 L7,9.50 L11.20,4.50" fill="none" stroke="#cfcfcf" stroke-width="1.4"/></svg><div style="position:absolute;left:561.67px;top:594.53px;font-size:13.2px;line-height:13.2px;color:#dedede;white-space:nowrap;font-weight:bold;">AOV MULTI-PASSES</div><div style="position:absolute;left:544px;top:627px;width:92px;height:27px;background:#3a3a3a;border-radius:13.5px;"></div><div style="position:absolute;left:576.90px;top:633.83px;font-size:14.5px;line-height:14.5px;color:#e0e0e0;white-space:nowrap;transform:scaleX(1.0656);transform-origin:0 0;">Add</div><div style="position:absolute;left:646.2px;top:630.7px;width:21px;height:21px;border-radius:50%;background:#3a3a3a"></div><svg style="position:absolute;left:651.2px;top:638.5px" width="11" height="7"><path d="M0.8,0.7 L10.2,0.7 L5.5,6.2 Z" fill="#c4c4c4"/></svg><div style="position:absolute;left:677px;top:627px;width:92px;height:27px;background:#303030;border-radius:13.5px;"></div><div style="position:absolute;left:694.84px;top:633.23px;font-size:14.5px;line-height:14.5px;color:#6a6a6a;white-space:nowrap;">Remove</div><div style="position:absolute;left:779px;top:627px;width:181px;height:27px;background:#3a3a3a;border-radius:13.5px;"></div><div style="position:absolute;left:793.20px;top:633.73px;font-size:14.5px;line-height:14.5px;color:#e0e0e0;white-space:nowrap;transform:scaleX(1.0206);transform-origin:0 0;">Add to Render Settings</div><div style="position:absolute;left:531px;top:670px;width:433px;height:1px;background:#222222;border-radius:0px;"></div><div style="position:absolute;left:533.99px;top:681.46px;font-size:16px;line-height:16px;color:#ececec;white-space:nowrap;transform:scaleX(1.0140);transform-origin:0 0;">Context</div><div style="position:absolute;left:561.25px;top:713.61px;font-size:14.4px;line-height:14.4px;color:#bababa;white-space:nowrap;transform:scaleX(1.0427);transform-origin:0 0;">Context</div><svg style="position:absolute;left:629.4px;top:712.5px" width="14" height="14"><circle cx="7" cy="7" r="4.35" fill="none" stroke="#bdbdbd" stroke-width="1.8"/></svg><div style="position:absolute;left:531px;top:804px;width:430px;height:9px;background:#4d4d4d;border-radius:4px;"></div>
</body></html>
